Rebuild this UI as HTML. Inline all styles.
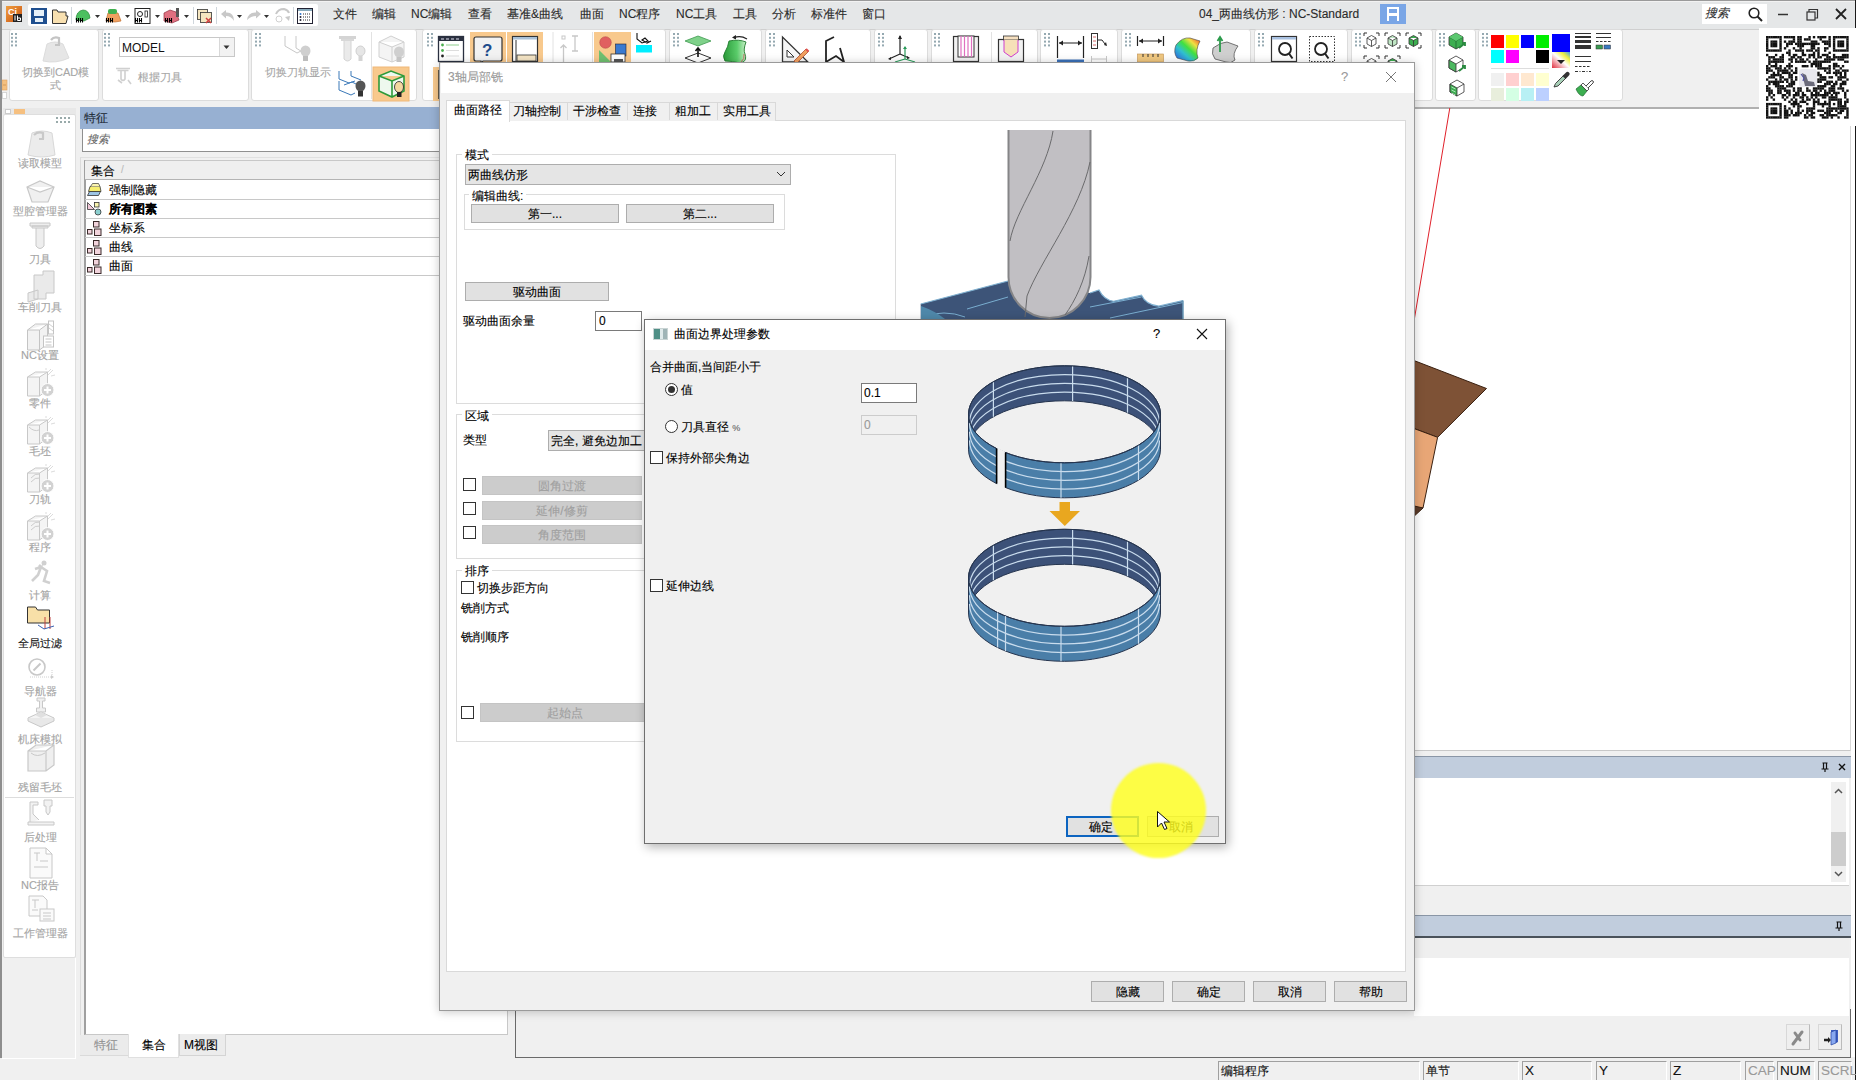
<!DOCTYPE html>
<html><head><meta charset="utf-8">
<style>
*{box-sizing:border-box;margin:0;padding:0}
html,body{width:1856px;height:1080px;overflow:hidden;background:#f0f0f0;font-family:"Liberation Sans",sans-serif;font-size:12px;color:#000}
.a{position:absolute}
.t{position:absolute;white-space:nowrap;line-height:1;-webkit-text-stroke-width:0.12px}
.tg{position:absolute;top:29px;height:72px;background:#fff;border:1px solid #dcdcdc;border-radius:3px}
.grip{position:absolute;left:4px;top:5px;width:6px;height:14px;background-image:radial-gradient(circle,#8a9aa6 1px,transparent 1.2px);background-size:4px 4px}
.btn{position:absolute;background:#e1e1e1;border:1px solid #adadad;text-align:center;line-height:18px;-webkit-text-stroke-width:0.12px}
.cb{position:absolute;width:13px;height:13px;border:1px solid #333;background:#fff}
.dis{color:#a0a0a0}
</style></head>
<body>
<!-- ============ MENU BAR ============ -->
<div class="a" style="left:0;top:0;width:1856px;height:30px;background:#e5e7e8;border-top:1px solid #9a9a9a;border-bottom:1px solid #cfcfcf"></div><div class="a" style="left:0;top:1px;width:1856px;height:1px;background:#f2f2f2"></div>
<div id="qat" class="a" style="left:28px;top:4px;width:290px;height:22px;background:#fff;border-radius:2px"></div>
<div class="t" style="left:333px;top:8px;color:#2b2b2b">文件</div><div class="t" style="left:372px;top:8px;color:#2b2b2b">编辑</div><div class="t" style="left:411px;top:8px;color:#2b2b2b">NC编辑</div><div class="t" style="left:468px;top:8px;color:#2b2b2b">查看</div><div class="t" style="left:507px;top:8px;color:#2b2b2b">基准&曲线</div><div class="t" style="left:580px;top:8px;color:#2b2b2b">曲面</div><div class="t" style="left:619px;top:8px;color:#2b2b2b">NC程序</div><div class="t" style="left:676px;top:8px;color:#2b2b2b">NC工具</div><div class="t" style="left:733px;top:8px;color:#2b2b2b">工具</div><div class="t" style="left:772px;top:8px;color:#2b2b2b">分析</div><div class="t" style="left:811px;top:8px;color:#2b2b2b">标准件</div><div class="t" style="left:862px;top:8px;color:#2b2b2b">窗口</div>
<svg class="a" style="left:0;top:0" width="330" height="29">
<defs><linearGradient id="appg" x1="0" y1="0" x2="1" y2="1"><stop offset="0" stop-color="#f0a040"/><stop offset="1" stop-color="#c85010"/></linearGradient></defs>
<rect x="6" y="6" width="16" height="16" fill="url(#appg)"/>
<text x="8" y="15" font-size="9" fill="#fff" font-family="Liberation Sans" font-weight="bold">Ci</text>
<rect x="13" y="14" width="9" height="8" fill="#222"/><path d="M15,15.5 v5 M17.5,15.5 v5 h3 v-2.5 h-3" stroke="#fff" stroke-width="1" fill="none"/>
<rect x="31" y="8" width="16" height="16" fill="#1f4f8f"/><rect x="34" y="10" width="10" height="6" fill="#e6f0f8"/><rect x="35" y="18" width="8" height="4" fill="#e6f0f8"/>
<path d="M52.5,10 L57,10 L58,12 L66,12 L66,16 L68,16 L66,23.5 L52.5,23.5 Z" fill="#f8e0b0" stroke="#333" stroke-width="1"/>
<line x1="71.5" y1="7" x2="71.5" y2="24" stroke="#cfd6dc"/>
<path d="M76,20 Q76,11 83,10 Q89,10 90,18 L84,21 Z" fill="#4cc060" stroke="#2a8a3a" stroke-width=".7"/><path d="M76.5,18 v4.5 M78.5,18 v4.5 M76,20.5 h3 M80.5,18 v4.5 M82.5,18 v4.5 M80,20.5 h3" stroke="#000" stroke-width="1.1"/>
<path d="M95,15 h5 l-2.5,3 z" fill="#333"/>
<path d="M106,21 L108,13 L118,13 L121,21 L115,22 Z" fill="#f0a060" stroke="#c07030" stroke-width=".7"/><rect x="108" y="9" width="9" height="5" rx="2" fill="#40b050"/><path d="M106.5,18 v4.5 M108.5,18 v4.5 M106,20.5 h3 M110.5,18 v4.5 M112.5,18 v4.5 M110,20.5 h3" stroke="#000" stroke-width="1.1"/>
<path d="M125,15 h5 l-2.5,3 z" fill="#333"/>
<rect x="135" y="8.5" width="15" height="15" fill="none" stroke="#222"/><circle cx="140" cy="14" r="2.5" fill="none" stroke="#222"/><rect x="145" y="11" width="2.5" height="6" fill="none" stroke="#222" stroke-width=".8"/><path d="M135.5,18 v4.5 M137.5,18 v4.5 M135,20.5 h3 M139.5,18 v4.5 M141.5,18 v4.5 M139,20.5 h3" stroke="#000" stroke-width="1.1"/>
<path d="M155,15 h5 l-2.5,3 z" fill="#333"/>
<path d="M164,21 L164,13 L170,10 L176,12 L179,20 L172,23 Z" fill="#e07080" stroke="#903040" stroke-width=".7"/><rect x="176" y="8" width="3" height="9" fill="#555"/><path d="M165.5,18 v4.5 M167.5,18 v4.5 M165,20.5 h3 M169.5,18 v4.5 M171.5,18 v4.5 M169,20.5 h3" stroke="#000" stroke-width="1.1"/>
<path d="M184,15 h5 l-2.5,3 z" fill="#333"/>
<line x1="193.5" y1="7" x2="193.5" y2="24" stroke="#cfd6dc"/>
<rect x="197.5" y="9.5" width="10" height="10" fill="#f5e6c0" stroke="#333" stroke-width=".8"/><rect x="200.5" y="12.5" width="11" height="10" fill="#f5e6c0" stroke="#333" stroke-width=".8"/><path d="M206,18 l5,5 M211,18 l-5,5" stroke="#d04040" stroke-width="1.5"/>
<line x1="216.5" y1="7" x2="216.5" y2="24" stroke="#cfd6dc"/>
<path d="M221,14 L226,10 L226,12.5 Q234,12 234,21 Q231,16 226,16 L226,18.5 Z" fill="#c8c8c8"/>
<path d="M237,15 h5 l-2.5,3 z" fill="#333"/>
<path d="M261,14 L256,10 L256,12.5 Q248,12 247,20 Q251,16 256,16 L256,18.5 Z" fill="#c8c8c8"/>
<path d="M264,15 h5 l-2.5,3 z" fill="#333"/>
<path d="M276,14 Q278,9 284,9 Q288,10 289,13" fill="none" stroke="#c8c8c8" stroke-width="2"/><path d="M285,17 l5,-1 l-1,5 z" fill="#c8c8c8"/><circle cx="279" cy="19" r="3" fill="none" stroke="#d0d0d0"/>
<line x1="293.5" y1="7" x2="293.5" y2="24" stroke="#cfd6dc"/>
<rect x="297.5" y="8.5" width="15" height="15" fill="#fff" stroke="#223" stroke-width="1"/><rect x="298" y="9" width="14" height="2" fill="#8ab"/><circle cx="300.5" cy="14" r="1" fill="#37c"/><circle cx="300.5" cy="17" r="1" fill="#223"/><circle cx="300.5" cy="20" r="1" fill="#223"/><path d="M303,14h7M303,17h7M303,20h7" stroke="#333" stroke-dasharray="1 1"/>
</svg>
<div class="t" style="left:1199px;top:8px;font-size:12px;color:#2b2b2b">04_两曲线仿形 : NC-Standard</div>
<svg class="a" style="left:1380px;top:4px" width="26" height="20"><rect width="26" height="20" fill="#7aa6e6"/><rect x="7" y="3" width="12" height="14" fill="#fff"/><rect x="9" y="5" width="8" height="4" fill="#7aa6e6"/><rect x="9" y="12" width="8" height="5" fill="#7aa6e6"/></svg>
<div class="a" style="left:1702px;top:4px;width:65px;height:20px;background:#fff"></div>
<div class="t" style="left:1705px;top:7px;font-size:12px;font-style:italic;color:#333">搜索</div>
<svg class="a" style="left:1747px;top:6px" width="18" height="17"><circle cx="7" cy="7" r="4.8" fill="none" stroke="#222" stroke-width="1.6"/><path d="M10.5,10.5 L15,15" stroke="#222" stroke-width="2"/></svg>
<svg class="a" style="left:1775px;top:6px" width="76" height="17"><path d="M3,8.5 h10" stroke="#333" stroke-width="1.5"/><rect x="32" y="6" width="8" height="8" fill="none" stroke="#333" stroke-width="1.2"/><path d="M34,6 v-2.5 h8.5 v8.5 h-2.5" fill="none" stroke="#333" stroke-width="1.2"/><path d="M61,3 l10,10 M71,3 l-10,10" stroke="#222" stroke-width="1.8"/></svg>

<!-- ============ TOOLBARS ============ -->
<div class="tg" style="left:9px;width:90px"></div>
<div class="tg" style="left:102px;width:147px"></div>
<div class="tg" style="left:251px;width:166px"></div>
<div class="tg" style="left:422px;width:244px"></div>
<div class="tg" style="left:669px;width:93px"></div>
<div class="tg" style="left:765px;width:106px"></div>
<div class="tg" style="left:874px;width:54px"></div>
<div class="tg" style="left:931px;width:107px"></div>
<div class="tg" style="left:1040px;width:78px"></div>
<div class="tg" style="left:1121px;width:130px"></div>
<div class="tg" style="left:1254px;width:94px"></div>
<div class="tg" style="left:1351px;width:82px"></div>
<div class="tg" style="left:1435px;width:41px"></div>
<div class="tg" style="left:1478px;width:145px"></div>

<!--TB--><svg class="a" style="left:0;top:0" width="1856" height="110"><rect x="2" y="80" width="5" height="10" fill="#f4c080" stroke="#e0a060" stroke-width=".6"/><line x1="3" y1="85" x2="6" y2="85" stroke="#c08040" stroke-width=".6"/><rect x="2.5" y="92.5" width="4" height="6" fill="#fff" stroke="#ccc" stroke-width=".8"/><rect x="11" y="33.0" width="2" height="2" fill="#95a9b1"/><rect x="15" y="33.0" width="2" height="2" fill="#95a9b1"/><rect x="11" y="36.8" width="2" height="2" fill="#95a9b1"/><rect x="15" y="36.8" width="2" height="2" fill="#95a9b1"/><rect x="11" y="40.6" width="2" height="2" fill="#95a9b1"/><rect x="15" y="40.6" width="2" height="2" fill="#95a9b1"/><rect x="11" y="44.4" width="2" height="2" fill="#95a9b1"/><rect x="15" y="44.4" width="2" height="2" fill="#95a9b1"/><rect x="104" y="33.0" width="2" height="2" fill="#95a9b1"/><rect x="108" y="33.0" width="2" height="2" fill="#95a9b1"/><rect x="104" y="36.8" width="2" height="2" fill="#95a9b1"/><rect x="108" y="36.8" width="2" height="2" fill="#95a9b1"/><rect x="104" y="40.6" width="2" height="2" fill="#95a9b1"/><rect x="108" y="40.6" width="2" height="2" fill="#95a9b1"/><rect x="104" y="44.4" width="2" height="2" fill="#95a9b1"/><rect x="108" y="44.4" width="2" height="2" fill="#95a9b1"/><rect x="255" y="33.0" width="2" height="2" fill="#95a9b1"/><rect x="259" y="33.0" width="2" height="2" fill="#95a9b1"/><rect x="255" y="36.8" width="2" height="2" fill="#95a9b1"/><rect x="259" y="36.8" width="2" height="2" fill="#95a9b1"/><rect x="255" y="40.6" width="2" height="2" fill="#95a9b1"/><rect x="259" y="40.6" width="2" height="2" fill="#95a9b1"/><rect x="255" y="44.4" width="2" height="2" fill="#95a9b1"/><rect x="259" y="44.4" width="2" height="2" fill="#95a9b1"/><rect x="427" y="33.0" width="2" height="2" fill="#95a9b1"/><rect x="431" y="33.0" width="2" height="2" fill="#95a9b1"/><rect x="427" y="36.8" width="2" height="2" fill="#95a9b1"/><rect x="431" y="36.8" width="2" height="2" fill="#95a9b1"/><rect x="427" y="40.6" width="2" height="2" fill="#95a9b1"/><rect x="431" y="40.6" width="2" height="2" fill="#95a9b1"/><rect x="427" y="44.4" width="2" height="2" fill="#95a9b1"/><rect x="431" y="44.4" width="2" height="2" fill="#95a9b1"/><rect x="673" y="33.0" width="2" height="2" fill="#95a9b1"/><rect x="677" y="33.0" width="2" height="2" fill="#95a9b1"/><rect x="673" y="36.8" width="2" height="2" fill="#95a9b1"/><rect x="677" y="36.8" width="2" height="2" fill="#95a9b1"/><rect x="673" y="40.6" width="2" height="2" fill="#95a9b1"/><rect x="677" y="40.6" width="2" height="2" fill="#95a9b1"/><rect x="673" y="44.4" width="2" height="2" fill="#95a9b1"/><rect x="677" y="44.4" width="2" height="2" fill="#95a9b1"/><rect x="769" y="33.0" width="2" height="2" fill="#95a9b1"/><rect x="773" y="33.0" width="2" height="2" fill="#95a9b1"/><rect x="769" y="36.8" width="2" height="2" fill="#95a9b1"/><rect x="773" y="36.8" width="2" height="2" fill="#95a9b1"/><rect x="769" y="40.6" width="2" height="2" fill="#95a9b1"/><rect x="773" y="40.6" width="2" height="2" fill="#95a9b1"/><rect x="769" y="44.4" width="2" height="2" fill="#95a9b1"/><rect x="773" y="44.4" width="2" height="2" fill="#95a9b1"/><rect x="878" y="33.0" width="2" height="2" fill="#95a9b1"/><rect x="882" y="33.0" width="2" height="2" fill="#95a9b1"/><rect x="878" y="36.8" width="2" height="2" fill="#95a9b1"/><rect x="882" y="36.8" width="2" height="2" fill="#95a9b1"/><rect x="878" y="40.6" width="2" height="2" fill="#95a9b1"/><rect x="882" y="40.6" width="2" height="2" fill="#95a9b1"/><rect x="878" y="44.4" width="2" height="2" fill="#95a9b1"/><rect x="882" y="44.4" width="2" height="2" fill="#95a9b1"/><rect x="934" y="33.0" width="2" height="2" fill="#95a9b1"/><rect x="938" y="33.0" width="2" height="2" fill="#95a9b1"/><rect x="934" y="36.8" width="2" height="2" fill="#95a9b1"/><rect x="938" y="36.8" width="2" height="2" fill="#95a9b1"/><rect x="934" y="40.6" width="2" height="2" fill="#95a9b1"/><rect x="938" y="40.6" width="2" height="2" fill="#95a9b1"/><rect x="934" y="44.4" width="2" height="2" fill="#95a9b1"/><rect x="938" y="44.4" width="2" height="2" fill="#95a9b1"/><rect x="1044" y="33.0" width="2" height="2" fill="#95a9b1"/><rect x="1048" y="33.0" width="2" height="2" fill="#95a9b1"/><rect x="1044" y="36.8" width="2" height="2" fill="#95a9b1"/><rect x="1048" y="36.8" width="2" height="2" fill="#95a9b1"/><rect x="1044" y="40.6" width="2" height="2" fill="#95a9b1"/><rect x="1048" y="40.6" width="2" height="2" fill="#95a9b1"/><rect x="1044" y="44.4" width="2" height="2" fill="#95a9b1"/><rect x="1048" y="44.4" width="2" height="2" fill="#95a9b1"/><rect x="1125" y="33.0" width="2" height="2" fill="#95a9b1"/><rect x="1129" y="33.0" width="2" height="2" fill="#95a9b1"/><rect x="1125" y="36.8" width="2" height="2" fill="#95a9b1"/><rect x="1129" y="36.8" width="2" height="2" fill="#95a9b1"/><rect x="1125" y="40.6" width="2" height="2" fill="#95a9b1"/><rect x="1129" y="40.6" width="2" height="2" fill="#95a9b1"/><rect x="1125" y="44.4" width="2" height="2" fill="#95a9b1"/><rect x="1129" y="44.4" width="2" height="2" fill="#95a9b1"/><rect x="1258" y="33.0" width="2" height="2" fill="#95a9b1"/><rect x="1262" y="33.0" width="2" height="2" fill="#95a9b1"/><rect x="1258" y="36.8" width="2" height="2" fill="#95a9b1"/><rect x="1262" y="36.8" width="2" height="2" fill="#95a9b1"/><rect x="1258" y="40.6" width="2" height="2" fill="#95a9b1"/><rect x="1262" y="40.6" width="2" height="2" fill="#95a9b1"/><rect x="1258" y="44.4" width="2" height="2" fill="#95a9b1"/><rect x="1262" y="44.4" width="2" height="2" fill="#95a9b1"/><rect x="1355" y="33.0" width="2" height="2" fill="#95a9b1"/><rect x="1359" y="33.0" width="2" height="2" fill="#95a9b1"/><rect x="1355" y="36.8" width="2" height="2" fill="#95a9b1"/><rect x="1359" y="36.8" width="2" height="2" fill="#95a9b1"/><rect x="1355" y="40.6" width="2" height="2" fill="#95a9b1"/><rect x="1359" y="40.6" width="2" height="2" fill="#95a9b1"/><rect x="1355" y="44.4" width="2" height="2" fill="#95a9b1"/><rect x="1359" y="44.4" width="2" height="2" fill="#95a9b1"/><rect x="1439" y="33.0" width="2" height="2" fill="#95a9b1"/><rect x="1443" y="33.0" width="2" height="2" fill="#95a9b1"/><rect x="1439" y="36.8" width="2" height="2" fill="#95a9b1"/><rect x="1443" y="36.8" width="2" height="2" fill="#95a9b1"/><rect x="1439" y="40.6" width="2" height="2" fill="#95a9b1"/><rect x="1443" y="40.6" width="2" height="2" fill="#95a9b1"/><rect x="1439" y="44.4" width="2" height="2" fill="#95a9b1"/><rect x="1443" y="44.4" width="2" height="2" fill="#95a9b1"/><rect x="1482" y="33.0" width="2" height="2" fill="#95a9b1"/><rect x="1486" y="33.0" width="2" height="2" fill="#95a9b1"/><rect x="1482" y="36.8" width="2" height="2" fill="#95a9b1"/><rect x="1486" y="36.8" width="2" height="2" fill="#95a9b1"/><rect x="1482" y="40.6" width="2" height="2" fill="#95a9b1"/><rect x="1486" y="40.6" width="2" height="2" fill="#95a9b1"/><rect x="1482" y="44.4" width="2" height="2" fill="#95a9b1"/><rect x="1486" y="44.4" width="2" height="2" fill="#95a9b1"/><path d="M43,61 L47,44 Q55,40 63,44 L69,58 Q56,64 43,61 Z" fill="#e6e6e6" stroke="#dcdcdc"/><path d="M51,40 Q54,36 59,38 L59,45 M55,45 h5" stroke="#c4c4c4" stroke-width="2.2" fill="none"/><rect x="119.5" y="37.5" width="115" height="19" fill="#fff" stroke="#c8c8c8"/><line x1="219.5" y1="38" x2="219.5" y2="56" stroke="#d8d8d8"/><rect x="220" y="38" width="14" height="18" fill="#f2f2f2"/><path d="M223.5,45.5 h6 l-3,3.5z" fill="#333"/><text x="122" y="51.5" font-size="12" font-family="Liberation Sans" fill="#111">MODEL</text><path d="M116,68.5 h14 M117.5,70.5 h11 M121,71 v8 q2,3 4,0 v-8 M118,80 l4,3 M128,80 l3,4" stroke="#d0d0d0" stroke-width="1.6" fill="none"/><path d="M285,36 v10 l12,7 l6,-3 M296,36 v12 l8,5" stroke="#c8c8c8" stroke-width="1" fill="none"/><ellipse cx="305.5" cy="51" rx="5" ry="5.5" fill="#cfcfcf"/><rect x="303" y="56" width="5" height="5" fill="#bdbdbd"/><rect x="339" y="36" width="17" height="3" fill="#d4d4d4"/><rect x="341" y="39" width="13" height="2" fill="#d8d8d8"/><path d="M344,41 v18 q3.5,4 7,0 v-18" fill="#eaeaea" stroke="#d4d4d4"/><ellipse cx="360.5" cy="51" rx="4.5" ry="5" fill="#e6e6e6" stroke="#d0d0d0"/><rect x="358.5" y="56" width="4" height="5" fill="#d4d4d4"/><path d="M339,71 v8 l10,4 l6,-2 M351,71 v5 l10,4 M339,81 v9 l12,5 l4,-2 M344,85 l8,-3 l4,2" stroke="#3a78b8" stroke-width="1" fill="none"/><ellipse cx="360.5" cy="86" rx="5" ry="5.5" fill="#555"/><rect x="358" y="91" width="5" height="5.5" fill="#333"/><line x1="371.5" y1="32" x2="371.5" y2="99" stroke="#e2e2e2"/><path d="M379,42 l12,-6 l13,6 v15 l-12,5 l-13,-5 Z M379,42 l13,5 l12,-5 M392,47 v15" fill="#f4f4f4" stroke="#d0d0d0"/><ellipse cx="399" cy="52" rx="5" ry="5.5" fill="#cfcfcf"/><rect x="396.5" y="57" width="5" height="5" fill="#c4c4c4"/><rect x="373" y="67" width="36" height="34" fill="#f8c98d" stroke="#f0b878"/><path d="M379,76 l12,-5 l13,5 v15 l-12,6 l-13,-6 Z M379,76 l13,5 l12,-5 M392,81 v16" fill="#eef8ee" stroke="#2e9a3a" stroke-width="1.6"/><ellipse cx="399" cy="87" rx="4.5" ry="5.5" fill="#f4d8a0" stroke="#222" stroke-width=".8"/><rect x="397" y="92" width="4.5" height="5" fill="#222"/><rect x="438.5" y="36.5" width="25" height="25" fill="#fff" stroke="#2a3040" stroke-width="1.3"/><rect x="439" y="37" width="24" height="4" fill="#2a3040"/><path d="M441,39h3M446,39h3M451,39h3M456,39h3" stroke="#dde" stroke-width="1"/><circle cx="442.5" cy="45" r="1.4" fill="#4caf50"/><circle cx="442.5" cy="50.5" r="1.4" fill="#4caf50"/><circle cx="442.5" cy="56" r="1.4" fill="#222"/><path d="M446,45h13" stroke="#a8d8a8" stroke-width="1.3"/><path d="M446,50.5h13M446,56h13" stroke="#ddd"/><rect x="470" y="32" width="36" height="31" fill="#f8c98d"/><rect x="507" y="32" width="36" height="31" fill="#f8c98d"/><path d="M476,37 h24 q2,0 2,2 v20 q0,2 -2,2 h-17 l-2,2 v-2 h-5 q-2,0 -2,-2 v-20 q0,-2 2,-2 Z" fill="#f2f2f2" stroke="#333" stroke-width="1.2"/><text x="482" y="56" font-size="17" font-weight="bold" font-family="Liberation Sans" fill="#1e4c8c">?</text><rect x="512.5" y="36.5" width="25" height="25" fill="#fff" stroke="#333" stroke-width="1.2"/><rect x="513" y="37" width="24" height="2.5" fill="#a8c0d8"/><line x1="516" y1="40" x2="516" y2="61" stroke="#333"/><rect x="517" y="55" width="19" height="6" fill="#f4e4c4" stroke="#333" stroke-width=".8"/><line x1="553" y1="32" x2="553" y2="62" stroke="#e2e2e2"/><line x1="592.5" y1="32" x2="592.5" y2="62" stroke="#e2e2e2"/><rect x="562" y="36" width="3" height="3" fill="none" stroke="#c8c8c8"/><path d="M563.5,62 v-16 M560.5,48 l3,-3 l3,3" stroke="#c8c8c8" stroke-width="1.3" fill="none"/><path d="M572,36 h6 M575,36 v15 M572,51 h6" stroke="#c8c8c8" stroke-width="1.3"/><rect x="594" y="32" width="37" height="31" fill="#f8c98d"/><circle cx="605.5" cy="42.5" r="5.8" fill="#e06060" stroke="#b04040" stroke-width=".5"/><rect x="615.5" y="44" width="10.5" height="12" fill="#3a7ad0" stroke="#223" stroke-width=".6"/><path d="M599,50 L611,62 H599 Z" fill="#70c070"/><rect x="611" y="54" width="14" height="8" fill="#fff" stroke="#333" stroke-width=".8"/><rect x="614" y="59" width="9" height="3" fill="#555"/><path d="M637,33 v6 l5,4 l6,-2 l-3,-3 l-3,2 l5,3 l4,-2" stroke="#111" stroke-width="1.1" fill="none"/><rect x="636" y="45" width="16" height="7.5" fill="#00eeff"/><rect x="433" y="67" width="7" height="34" fill="#f8c98d"/><line x1="439" y1="70" x2="439" y2="99" stroke="#333" stroke-width="1.5"/><path d="M685,41 l13,-5 l13,5 l-13,5 Z" fill="#7fd18a" stroke="#3f9a50" stroke-width=".8"/><path d="M685,58 l13,-5 l13,5 l-13,5 Z" fill="#fff" stroke="#333" stroke-width="1"/><path d="M698,57 v-8 M695.5,51 l2.5,-3 l2.5,3" stroke="#111" stroke-width="1.6" fill="none"/><defs><linearGradient id="gs" x1="0" y1="0" x2="1" y2="0"><stop offset="0" stop-color="#2a9a3a"/><stop offset=".6" stop-color="#5acc6a"/><stop offset="1" stop-color="#c8f0c8"/></linearGradient></defs><path d="M729,41 q10,-2 17,1 q-3,8 -1,12 q2,6 -2,8 l-3,1 q-8,-2 -15,-2 q-3,-5 0,-9 q3,-5 4,-11 Z" fill="url(#gs)" stroke="#1f7a2c" stroke-width=".9"/><path d="M741,62 q4,-3 3,-8" stroke="#c05050" stroke-width=".8" fill="none"/><path d="M734,38 q6,-3 13,1" stroke="#222" stroke-width="1.3" fill="none"/><path d="M732,37.5 l4,-2.5 l0,4.5z" fill="#222"/><path d="M782.5,37 V62 H808 Z" fill="#f6f6f6" stroke="#333" stroke-width="1.3"/><path d="M787,50 V57 H794 Z" fill="#fff" stroke="#333" stroke-width="1"/><path d="M794,61 l12,-12 l2.5,2.5 l-12,12 Z" fill="#f0a060" stroke="#b05030" stroke-width=".8"/><path d="M806,49 l2.5,2.5" stroke="#e05050" stroke-width="2"/><path d="M834,37 L826,41 V62 L836,56 L844,62 L840,48" stroke="#222" stroke-width="1.8" fill="none"/><path d="M900,36 v18 M900,54 l-11,5 M900,54 l9,4" stroke="#222" stroke-width="1.2" fill="none"/><path d="M898,39 l2,-4 l2,4z M891,57 l-3,2 l3,1z M907,56 l3,2 l-3,1z" fill="#222"/><path d="M905,47 v12 M905,59 l-10,3 M905,59 l10,3" stroke="#2a9a5a" stroke-width="1.2" fill="none"/><path d="M903,49 l2,-3 l2,3z" fill="#2a9a5a"/><rect x="953.5" y="36.5" width="25" height="25" fill="#f2f2f2" stroke="#333" stroke-width="1.2"/><rect x="958" y="36" width="16" height="21" fill="#fff" stroke="#333" stroke-width="1"/><path d="M961,36 v21 M964.5,36 v21 M968,36 v21 M971.5,36 v21" stroke="#e070c0" stroke-width="1.2"/><line x1="991.5" y1="32" x2="991.5" y2="62" stroke="#e2e2e2"/><rect x="998.5" y="39.5" width="25" height="22" fill="#f2f2f2" stroke="#333" stroke-width="1.2"/><rect x="1003.5" y="36" width="15" height="4" fill="#f6e0c0" stroke="#333" stroke-width=".8"/><path d="M1004,40 v12 l7,5 l7,-5 v-12" fill="#f6e0b8" stroke="#d040d0" stroke-width="1"/><path d="M1057.5,36 v22 M1083.5,36 v22 M1059,43 h23" stroke="#222" stroke-width="1.2"/><path d="M1059,43 l4,-2.5 v5z M1082,43 l-4,-2.5 v5z" fill="#222"/><rect x="1057" y="59.5" width="27" height="3" fill="#3a70b8"/><rect x="1091.5" y="33.5" width="6" height="15" fill="#fff" stroke="#333"/><path d="M1093,37 h3 M1093,41 h3 M1093,45 h3" stroke="#c44" stroke-width=".8"/><path d="M1098,40 h4 l3,4" stroke="#222" fill="none"/><path d="M1104,45 l2,-3 l1,4z" fill="#222"/><path d="M1091.5,56 v6 M1106.5,56 v6 M1092,59 h14" stroke="#c8c8c8"/><path d="M1137.5,36 v10 M1163.5,36 v10 M1139,41 h23" stroke="#222" stroke-width="1.2"/><path d="M1139,41 l4,-2.5 v5z M1162,41 l-4,-2.5 v5z" fill="#222"/><rect x="1137.5" y="54" width="26" height="8" fill="#f0c880" stroke="#c09050" stroke-width=".6"/><path d="M1143,54 v3 M1148,54 v3 M1153,54 v3 M1158,54 v3" stroke="#333"/><defs><linearGradient id="rb" x1="0" y1="1" x2="1" y2="0"><stop offset="0" stop-color="#3050e0"/><stop offset=".35" stop-color="#30c0d0"/><stop offset=".55" stop-color="#40e040"/><stop offset=".75" stop-color="#f0e040"/><stop offset="1" stop-color="#f04030"/></linearGradient></defs><path d="M1176,45 q6,-8 14,-7 l10,3 q-5,9 -2,17 q-4,4 -10,3 l-11,-3 q-4,-6 -1,-13 Z" fill="url(#rb)" stroke="#444" stroke-width=".6"/><path d="M1213,48 q8,-6 14,-6 l11,4 q-6,8 -3,14 q-4,4 -9,2 l-11,-3 q-4,-5 -2,-11 Z" fill="#cfcfcf" stroke="#444" stroke-width=".7"/><path d="M1220,52 v-13 M1217.5,41 l2.5,-4 l2.5,4" stroke="#2a9a4a" stroke-width="1.8" fill="none"/><rect x="1271.5" y="36.5" width="25" height="25" fill="#fff" stroke="#333" stroke-width="1.2"/><rect x="1272" y="37" width="24" height="2.5" fill="#a8c0e0"/><circle cx="1285" cy="49" r="6" fill="none" stroke="#222" stroke-width="1.8"/><path d="M1289,53.5 l3.5,5" stroke="#222" stroke-width="2"/><rect x="1309.5" y="36.5" width="25" height="25" fill="none" stroke="#333" stroke-width="1" stroke-dasharray="1.5 1.5"/><circle cx="1321" cy="49" r="6" fill="none" stroke="#222" stroke-width="1.8"/><path d="M1325,53.5 l3.5,5" stroke="#222" stroke-width="2"/><path d="M1364,36 v-3 h3 M1376,33 h3 v3 M1364,45 v3 h3 M1376,48 h3 v-3" stroke="#333" stroke-width="1" fill="none"/><path d="M1367,38 l4.5,-2.5 l4.5,2.5 v6 l-4.5,2.5 l-4.5,-2.5 Z M1367,38 l4.5,2.5 l4.5,-2.5 M1371.5,40.5 v6" fill="#fff" stroke="#333" stroke-width=".8"/><path d="M1385,36 v-3 h3 M1397,33 h3 v3 M1385,45 v3 h3 M1397,48 h3 v-3" stroke="#333" stroke-width="1" fill="none"/><path d="M1388,38 l4.5,-2.5 l4.5,2.5 v6 l-4.5,2.5 l-4.5,-2.5 Z M1388,38 l4.5,2.5 l4.5,-2.5 M1392.5,40.5 v6" fill="#bfe6c4" stroke="#333" stroke-width=".8"/><path d="M1406,36 v-3 h3 M1418,33 h3 v3 M1406,45 v3 h3 M1418,48 h3 v-3" stroke="#333" stroke-width="1" fill="none"/><path d="M1409,38 l4.5,-2.5 l4.5,2.5 v6 l-4.5,2.5 l-4.5,-2.5 Z M1409,38 l4.5,2.5 l4.5,-2.5 M1413.5,40.5 v6" fill="#3cae50" stroke="#333" stroke-width=".8"/><path d="M1364,59 v-3 h3 M1376,56 h3 v3 M1364,68 v3 h3 M1376,71 h3 v-3" stroke="#333" stroke-width="1" fill="none"/><path d="M1367,61 l4.5,-2.5 l4.5,2.5 v6 l-4.5,2.5 l-4.5,-2.5 Z M1367,61 l4.5,2.5 l4.5,-2.5 M1371.5,63.5 v6" fill="#fff" stroke="#333" stroke-width=".8"/><path d="M1385,59 v-3 h3 M1397,56 h3 v3 M1385,68 v3 h3 M1397,71 h3 v-3" stroke="#333" stroke-width="1" fill="none"/><path d="M1388,61 l4.5,-2.5 l4.5,2.5 v6 l-4.5,2.5 l-4.5,-2.5 Z M1388,61 l4.5,2.5 l4.5,-2.5 M1392.5,63.5 v6" fill="#3cae50" stroke="#333" stroke-width=".8"/><path d="M1449,37 l7,-4 l7,4 v8 l-7,4 l-7,-4 Z" fill="#3cae50" stroke="#333" stroke-width=".8"/><path d="M1449,37 l7,4 l7,-4 M1456,41 v8" fill="none" stroke="#1f6a30" stroke-width=".8"/><path d="M1449,37 l7,-4 l7,4 l-7,4z" fill="#5cc870"/><path d="M1459,48 l5,-4 M1462,43 h3 v3" stroke="#2a8a40" stroke-width="1.8" fill="none"/><path d="M1449,60 l7,-4 l7,4 v8 l-7,4 l-7,-4 Z" fill="#fff" stroke="#333" stroke-width=".8"/><path d="M1449,60 l7,4 v8 l-7,-4z" fill="#4cb860" stroke="#333" stroke-width=".8"/><path d="M1456,64 l7,-4" stroke="#333" stroke-width=".8"/><path d="M1459,71 l5,-4 M1462,66 h3 v3" stroke="#2a8a40" stroke-width="1.8" fill="none"/><path d="M1450,84 l7,-4 l7,4 v8 l-7,4 l-7,-4 Z" fill="#fff" stroke="#333" stroke-width=".8"/><path d="M1450,84 l7,4 v8 l-7,-4z" fill="#3cae50" stroke="#333" stroke-width=".8"/><path d="M1457,88 l7,-4" stroke="#333" stroke-width=".8"/><path d="M1451.5,87 l4,2 M1451.5,90 l4,2 M1451.5,93 l4,2" stroke="#c8f0d0" stroke-width=".8"/><rect x="1491" y="35" width="13" height="13" fill="#ff0000"/><rect x="1506" y="35" width="13" height="13" fill="#ffff00"/><rect x="1521" y="35" width="13" height="13" fill="#0000ff"/><rect x="1536" y="35" width="13" height="13" fill="#00ee00"/><rect x="1491" y="50" width="13" height="13" fill="#00ffff"/><rect x="1506" y="50" width="13" height="13" fill="#ff00ff"/><rect x="1536" y="50" width="13" height="13" fill="#000000"/><line x1="1491" y1="68.5" x2="1549" y2="68.5" stroke="#ddd"/><rect x="1491" y="73" width="13" height="13" fill="#f0f0f0"/><rect x="1506" y="73" width="13" height="13" fill="#ffd0d0"/><rect x="1521" y="73" width="13" height="13" fill="#ffe8d0"/><rect x="1536" y="73" width="13" height="13" fill="#ffffd0"/><rect x="1491" y="88" width="13" height="13" fill="#e8eedc"/><rect x="1506" y="88" width="13" height="13" fill="#d4ffe4"/><rect x="1521" y="88" width="13" height="13" fill="#b8f0f4"/><rect x="1536" y="88" width="13" height="13" fill="#bcd0ff"/><rect x="1552" y="34" width="18" height="18" fill="#0000ff"/><defs><linearGradient id="cw" x1="0" y1="1" x2="1" y2="0"><stop offset="0" stop-color="#e03040"/><stop offset=".5" stop-color="#fff"/><stop offset=".75" stop-color="#f0f040"/><stop offset="1" stop-color="#40a0f0"/></linearGradient></defs><rect x="1552" y="52" width="18" height="16" fill="url(#cw)"/><path d="M1557,60 h8 l-4,4z" fill="#222"/><path d="M1575,33.5 h16" stroke="#333" stroke-width="1"/><path d="M1575,37 h16" stroke="#333" stroke-width="2"/><path d="M1575,41.5 h16" stroke="#333" stroke-width="3"/><path d="M1575,47 h16" stroke="#333" stroke-width="4"/><path d="M1596,33.5 h15 M1596,37.5 h15" stroke="#333" stroke-width="1"/><path d="M1596,41.5 h15" stroke="#333" stroke-width="1.2" stroke-dasharray="2.5 1.5"/><rect x="1596" y="45" width="6.5" height="4" fill="#3a9a50" stroke="#333" stroke-width=".5"/><rect x="1604" y="45" width="6.5" height="4" fill="#3a78c0" stroke="#333" stroke-width=".5"/><path d="M1575,56.5 h16 M1575,61.5 h16" stroke="#333" stroke-width="1"/><path d="M1575,66.5 h16" stroke="#333" stroke-width="1.2" stroke-dasharray="2.5 1.5"/><path d="M1575,71.5 h16" stroke="#333" stroke-width="1.2" stroke-dasharray="3 1.5 1 1.5"/><path d="M1554,87 l1.5,-3.5 l8,-8 l2.5,2.5 l-8,8 Z" fill="#a8d0b8" stroke="#333" stroke-width=".9"/><path d="M1562.5,76 l3,-3 q2,-2 3.5,-.5 q1.5,1.5 -.5,3.5 l-3,3 z" fill="#333"/><path d="M1576,89 l5,-4 l6,6 l-4,5 q-4,0 -7,-7z" fill="#3cae50" stroke="#1f6a30" stroke-width=".7"/><path d="M1581,85 l2,-2 l6,6 l-2,2z" fill="#fff" stroke="#333" stroke-width=".8"/><path d="M1586,86 l5,-5 q1,-1 2,0 q1,1 0,2 l-5,5" fill="#fff" stroke="#333" stroke-width=".9"/></svg>
<div class="t" style="left:22px;top:67px;color:#a6a6a6;font-size:11px">切换到CAD模</div>
<div class="t" style="left:50px;top:80px;color:#a6a6a6;font-size:11px">式</div>
<div class="t" style="left:138px;top:72px;color:#a6a6a6;font-size:11px">根据刀具</div>
<div class="t" style="left:265px;top:67px;color:#a6a6a6;font-size:11px">切换刀轨显示</div>
<!--/TB-->
<!-- ============ LEFT SIDEBAR ============ -->
<!--SB--><div class="a" style="left:0;top:0;width:2px;height:1058px;background:#8e8e8e"></div>
<div class="a" style="left:3px;top:108px;width:73px;height:7px;background:#e8e8e8"></div>
<div class="a" style="left:5px;top:109px;width:6px;height:5px;background:#fff;border:1px solid #ccc"></div><div class="a" style="left:14px;top:109px;width:11px;height:5px;background:#f6c080"></div>
<div class="a" style="left:3px;top:114px;width:73px;height:844px;background:#fff;border:1px solid #dedede;border-radius:2px"></div>
<svg class="a" style="left:56px;top:117px" width="18" height="8"><g fill="#9aa"><rect x="0" y="0" width="2" height="2"/><rect x="0" y="4" width="2" height="2"/><rect x="4" y="0" width="2" height="2"/><rect x="4" y="4" width="2" height="2"/><rect x="8" y="0" width="2" height="2"/><rect x="8" y="4" width="2" height="2"/><rect x="12" y="0" width="2" height="2"/><rect x="12" y="4" width="2" height="2"/></g></svg>
<div class="a" style="left:5px;top:797px;width:69px;height:1px;background:#ddd"></div>
<div class="a" style="left:75px;top:958px;width:1px;height:100px;background:#fff"></div><div class="a" style="left:2px;top:1058px;width:74px;height:1px;background:#fff"></div>
<svg class="a" style="left:0;top:24px" width="80" height="940"><path d="M28,131 l4,-22 q10,-4 20,0 l3,22 q-13,4 -27,0 Z" fill="#ececec" stroke="#d8d8d8"/><path d="M34,111 q4,-4 9,-2 v6 M39,115 h5" stroke="#c8c8c8" stroke-width="2.2" fill="none"/><path d="M27,163 l13,-6 l14,6 l-6,15 h-16 Z M27,163 l13,5 l14,-5" fill="#f0f0f0" stroke="#c8c8c8" stroke-width="1.2"/><path d="M30,199 h20 v3 h-20z M32,202 h16 v2 h-16z M36,204 v18 q4,5 8,0 v-18" fill="#eee" stroke="#c8c8c8"/><path d="M34,251 h9 v-4 h11 v22 h-8 v6 h-12 z M28,269 l10,-3 v9 l-10,3z" fill="#eaeaea" stroke="#c8c8c8"/><path d="M27.5,306 l8,-6 h12 v20 l-8,6 h-12 z M27.5,306 h12 l8,-6 M39.5,306 v20" fill="#f2f2f2" stroke="#c4c4c4"/><rect x="43.5" y="312" width="10" height="11" fill="#fff" stroke="#c4c4c4"/><path d="M45.5,315h6M45.5,318h6M45.5,321h6" stroke="#c4c4c4"/><rect x="48.5" y="297" width="5" height="13" fill="#fff" stroke="#c4c4c4"/><path d="M49,300 l4,3 M49,304 l4,3" stroke="#d0d0d0"/><path d="M27.5,353 l8,-5 h12 v18 l-8,6 h-12 z M27.5,353 h12 l8,-5 M39.5,353 v19" fill="#f4f4f4" stroke="#c8c8c8"/><circle cx="47.5" cy="366" r="6.5" fill="#d2d2d2" stroke="#fff" stroke-width="1"/><path d="M47.5,362.5 v7 M44,366 h7" stroke="#fff" stroke-width="2"/><path d="M48,348 l3,-3 M51,352 l4,-1 M48,351 l5,-5 M46,346 v-2" stroke="#dcdcdc"/><path d="M27.5,401 l8,-5 h12 v18 l-8,6 h-12 z M27.5,401 h12 l8,-5 M39.5,401 v19" fill="#f4f4f4" stroke="#c8c8c8"/><path d="M29,403 q5,5 10,3" stroke="#ccc" fill="none"/><circle cx="47.5" cy="414" r="6.5" fill="#d2d2d2" stroke="#fff" stroke-width="1"/><path d="M47.5,410.5 v7 M44,414 h7" stroke="#fff" stroke-width="2"/><path d="M48,396 l3,-3 M51,400 l4,-1 M48,399 l5,-5 M46,394 v-2" stroke="#dcdcdc"/><path d="M27.5,449 l8,-5 h12 v18 l-8,6 h-12 z M27.5,449 h12 l8,-5 M39.5,449 v19" fill="#f4f4f4" stroke="#c8c8c8"/><path d="M31,454 q4,-5 9,-4 M31,458 q4,-5 9,-4" stroke="#ccc" fill="none"/><circle cx="47.5" cy="462" r="6.5" fill="#d2d2d2" stroke="#fff" stroke-width="1"/><path d="M47.5,458.5 v7 M44,462 h7" stroke="#fff" stroke-width="2"/><path d="M48,444 l3,-3 M51,448 l4,-1 M48,447 l5,-5 M46,442 v-2" stroke="#dcdcdc"/><path d="M27.5,497 l8,-5 h12 v18 l-8,6 h-12 z M27.5,497 h12 l8,-5 M39.5,497 v19" fill="#f4f4f4" stroke="#c8c8c8"/><path d="M31,502 q4,-5 9,-4 M31,506 q4,-5 9,-4" stroke="#ccc" fill="none"/><circle cx="47.5" cy="510" r="6.5" fill="#d2d2d2" stroke="#fff" stroke-width="1"/><path d="M47.5,506.5 v7 M44,510 h7" stroke="#fff" stroke-width="2"/><path d="M48,492 l3,-3 M51,496 l4,-1 M48,495 l5,-5 M46,490 v-2" stroke="#dcdcdc"/><path d="M32,557 l6,-6 l3,-8 l-6,2 M41,543 l6,4 l-3,10 l6,2 M41,543 l-2,-2" stroke="#d0d0d0" stroke-width="2.6" fill="none"/><circle cx="44" cy="539" r="2.5" fill="#d0d0d0"/><path d="M27.5,583 h8 l2,3 h12 v13 h-22 z" fill="#f8e0a8" stroke="#333" stroke-width="1"/><path d="M45,593 v12 M50,593 v12" stroke="#c04040"/><path d="M38,601 l6,4 l10,-3" stroke="#3a60b0" fill="none"/><circle cx="37" cy="643" r="8" fill="none" stroke="#c8c8c8" stroke-width="1.6"/><path d="M33.5,646.5 l7,-7" stroke="#c8c8c8" stroke-width="2"/><path d="M30,653 h22 v-7" stroke="#d0d0d0" stroke-dasharray="1 1" fill="none"/><path d="M51,651 l3,2 l-3,2z" fill="#ccc"/><path d="M37,674 h8 v3 h-2.5 v7 h3 v4 h-9 v-4 h3 v-7 h-2.5z" fill="#f0f0f0" stroke="#c8c8c8"/><path d="M28,694 l13,-6 l13,6 l-13,6 z" fill="#f4f4f4" stroke="#c8c8c8"/><path d="M28,694 v3 l13,6 l13,-6 v-3" fill="#e8e8e8" stroke="#c8c8c8"/><path d="M35,691 l6,-3 l6,3 l-6,3z" fill="#e0e0e0"/><path d="M28,727 l8,-6 h18 v20 l-8,6 h-18 z M28,727 h18 l8,-6 M46,727 v20" fill="#efefef" stroke="#c8c8c8" stroke-width="1.2"/><path d="M31,729 q6,5 14,0" stroke="#c8c8c8" fill="none"/><path d="M28,801 h26 v-3 h-26z M30,798 v-20 h8 v3 h-5 v9 l6,6 M44,776 h8 v6 h-2 v6 l-2,3 l-2,-3 v-6 h-2z" fill="#f2f2f2" stroke="#c8c8c8"/><path d="M30,824 h16 l6,6 v24 h-22 z M46,824 v6 h6" fill="#fafafa" stroke="#c8c8c8"/><path d="M34,829 h6 M37,829 v8 M40,837 h8 M34,843 h14" stroke="#c8c8c8"/><path d="M29,872 h14 l4,4 v16 h-18 z" fill="#fafafa" stroke="#c8c8c8"/><rect x="40" y="885" width="14" height="12" fill="#fafafa" stroke="#c8c8c8"/><path d="M43,889h8M43,892h8M43,895h8" stroke="#c8c8c8"/><path d="M32,876h7M35,876v8M32,886h6" stroke="#c8c8c8"/></svg>
<div class="t" style="left:0;width:80px;text-align:center;top:158px;font-size:11px;color:#a4a4a4">读取模型</div>
<div class="t" style="left:0;width:80px;text-align:center;top:206px;font-size:11px;color:#a4a4a4">型腔管理器</div>
<div class="t" style="left:0;width:80px;text-align:center;top:254px;font-size:11px;color:#a4a4a4">刀具</div>
<div class="t" style="left:0;width:80px;text-align:center;top:302px;font-size:11px;color:#a4a4a4">车削刀具</div>
<div class="t" style="left:0;width:80px;text-align:center;top:350px;font-size:11px;color:#a4a4a4">NC设置</div>
<div class="t" style="left:0;width:80px;text-align:center;top:398px;font-size:11px;color:#a4a4a4">零件</div>
<div class="t" style="left:0;width:80px;text-align:center;top:446px;font-size:11px;color:#a4a4a4">毛坯</div>
<div class="t" style="left:0;width:80px;text-align:center;top:494px;font-size:11px;color:#a4a4a4">刀轨</div>
<div class="t" style="left:0;width:80px;text-align:center;top:542px;font-size:11px;color:#a4a4a4">程序</div>
<div class="t" style="left:0;width:80px;text-align:center;top:590px;font-size:11px;color:#a4a4a4">计算</div>
<div class="t" style="left:0;width:80px;text-align:center;top:638px;font-size:11px;color:#111">全局过滤</div>
<div class="t" style="left:0;width:80px;text-align:center;top:686px;font-size:11px;color:#a4a4a4">导航器</div>
<div class="t" style="left:0;width:80px;text-align:center;top:734px;font-size:11px;color:#a4a4a4">机床模拟</div>
<div class="t" style="left:0;width:80px;text-align:center;top:782px;font-size:11px;color:#a4a4a4">残留毛坯</div>
<div class="t" style="left:0;width:80px;text-align:center;top:832px;font-size:11px;color:#a4a4a4">后处理</div>
<div class="t" style="left:0;width:80px;text-align:center;top:880px;font-size:11px;color:#a4a4a4">NC报告</div>
<div class="t" style="left:0;width:80px;text-align:center;top:928px;font-size:11px;color:#a4a4a4">工作管理器</div>
<div class="a" style="left:80px;top:107px;width:432px;height:22px;background:#97b0d2"></div>
<div class="t" style="left:84px;top:112px;font-size:12px;color:#1e2a36">特征</div>
<div class="a" style="left:82px;top:129px;width:430px;height:23px;background:#fff;border:1px solid #8f8f8f;border-top:none"></div>
<div class="t" style="left:87px;top:134px;font-size:11px;font-style:italic;color:#666">搜索</div>
<div class="a" style="left:76px;top:153px;width:438px;height:905px;background:#f0f0f0"></div>
<div class="a" style="left:80px;top:157px;width:428px;height:878px;border-left:1px solid #dcdcdc;border-top:1px solid #e0e0e0"></div>
<div class="a" style="left:84px;top:160px;width:424px;height:875px;background:#fff;border:1px solid #c8c8c8;border-left:2px solid #a0a0a0"></div>
<div class="a" style="left:85px;top:161px;width:427px;height:19px;background:#efefef;border-bottom:1px solid #b4b4b4"></div>
<div class="t" style="left:91px;top:165px;font-size:12px">集合</div><div class="t" style="left:121px;top:165px;font-size:10px;color:#bbb">/</div>
<div class="a" style="left:85px;top:199px;width:427px;height:1px;background:#c8c8c8"></div>
<div class="t" style="left:109px;top:184px;font-size:12px;">强制隐藏</div>
<div class="a" style="left:85px;top:218px;width:427px;height:1px;background:#c8c8c8"></div>
<div class="t" style="left:109px;top:203px;font-size:12px;font-weight:bold;">所有图素</div>
<div class="a" style="left:85px;top:237px;width:427px;height:1px;background:#c8c8c8"></div>
<div class="t" style="left:109px;top:222px;font-size:12px;">坐标系</div>
<div class="a" style="left:85px;top:256px;width:427px;height:1px;background:#c8c8c8"></div>
<div class="t" style="left:109px;top:241px;font-size:12px;">曲线</div>
<div class="a" style="left:85px;top:275px;width:427px;height:1px;background:#c8c8c8"></div>
<div class="t" style="left:109px;top:260px;font-size:12px;">曲面</div>
<svg class="a" style="left:0;top:0" width="120" height="280"><path d="M87.5,195.5 l2,-4 h11 l-2,4z" fill="#9cc4e4" stroke="#333" stroke-width=".8"/><path d="M88.5,191.5 l1.5,-5 h10 l1,5z" fill="#f6ee70" stroke="#333" stroke-width=".8"/><path d="M90.5,186.5 l2,-3 h6 l1.5,3" fill="#faf4b0" stroke="#333" stroke-width=".7"/><path d="M87.5,202.5 v7 h7z" fill="#f0c8d8" stroke="#333" stroke-width=".8"/><rect x="94.5" y="202.5" width="4.5" height="4.5" fill="#f8f4b0" stroke="#333" stroke-width=".8"/><circle cx="98" cy="212" r="3" fill="#8cd0d0" stroke="#333" stroke-width=".8"/><rect x="93.5" y="221.5" width="5.5" height="5.5" fill="#f2d4dc" stroke="#3a2a2a" stroke-width="1"/><rect x="87.5" y="229.5" width="4.5" height="4.5" fill="#f2d4dc" stroke="#3a2a2a" stroke-width="1"/><rect x="94.5" y="229" width="6.5" height="6.5" fill="#f2d4dc" stroke="#3a2a2a" stroke-width="1"/><rect x="93.5" y="240.5" width="5.5" height="5.5" fill="#f2d4dc" stroke="#3a2a2a" stroke-width="1"/><rect x="87.5" y="248.5" width="4.5" height="4.5" fill="#f2d4dc" stroke="#3a2a2a" stroke-width="1"/><rect x="94.5" y="248" width="6.5" height="6.5" fill="#f2d4dc" stroke="#3a2a2a" stroke-width="1"/><rect x="93.5" y="259.5" width="5.5" height="5.5" fill="#f2d4dc" stroke="#3a2a2a" stroke-width="1"/><rect x="87.5" y="267.5" width="4.5" height="4.5" fill="#f2d4dc" stroke="#3a2a2a" stroke-width="1"/><rect x="94.5" y="267" width="6.5" height="6.5" fill="#f2d4dc" stroke="#3a2a2a" stroke-width="1"/></svg>
<div class="a" style="left:80px;top:1035px;width:48px;height:21px;background:#ebebeb;border-bottom:1px solid #dadada"></div>
<div class="a" style="left:128px;top:1034px;width:51px;height:24px;background:#fff;border:1px solid #e0e0e0;border-top:none"></div>
<div class="a" style="left:179px;top:1034px;width:47px;height:22px;background:#ececec;border:1px solid #d4d4d4;border-top:none"></div>
<div class="t" style="left:94px;top:1039px;color:#909090">特征</div>
<div class="t" style="left:142px;top:1039px">集合</div>
<div class="t" style="left:184px;top:1039px">M视图</div>
<!--/SB-->
<!-- ============ VIEWPORT ============ -->
<!--VP--><div class="a" style="left:515px;top:107px;width:1336px;height:644px;background:#fff;border-top:2px solid #b0b0b0;border-bottom:1px solid #c8c8c8"></div>
<svg class="a" style="left:1400px;top:100px" width="100" height="440">
<line x1="49.8" y1="8" x2="10" y2="245" stroke="#e0202a" stroke-width="1"/>
<path d="M10,259 L86.5,288.5 L37.6,337.3 L10,327 Z" fill="#7e5236" stroke="#3a2010" stroke-width="1"/>
<path d="M10,327 L37.6,337.3 L23,408 L10,410 Z" fill="#e8a676" stroke="#3a2010" stroke-width="1"/>
<path d="M10,405 L23,408 L10,420 Z" fill="#5a3a28" stroke="#3a2010" stroke-width="1"/>
</svg>
<div class="a" style="left:1414px;top:756px;width:437px;height:22px;background:#c1cddd;border-top:1px solid #8a96a6"></div>
<svg class="a" style="left:1818px;top:759px" width="32" height="16"><path d="M4.5,4 h5 M5.5,4 v6 M8.5,4 v6 M3.5,10 h7 M7,10 v3" stroke="#111" stroke-width="1.2" fill="none"/><path d="M21,5 l6,6 M27,5 l-6,6" stroke="#111" stroke-width="1.4"/></svg>
<div class="a" style="left:1414px;top:778px;width:435px;height:108px;background:#fff;border-bottom:1px solid #d0d0d0"></div>
<div class="a" style="left:1831px;top:782px;width:15px;height:100px;background:#f0f0f0"></div>
<div class="a" style="left:1831px;top:832px;width:15px;height:34px;background:#cdcdcd"></div>
<svg class="a" style="left:1831px;top:782px" width="15" height="100"><path d="M4,11 l3.5,-3.5 l3.5,3.5" stroke="#555" stroke-width="1.5" fill="none"/><path d="M4,90 l3.5,3.5 l3.5,-3.5" stroke="#555" stroke-width="1.5" fill="none"/></svg>
<div class="a" style="left:1414px;top:915px;width:437px;height:23px;background:#c1cddd;border-top:1px solid #8a96a6;border-bottom:2px solid #4a525a"></div>
<svg class="a" style="left:1832px;top:918px" width="16" height="16"><path d="M4.5,4 h5 M5.5,4 v6 M8.5,4 v6 M3.5,10 h7 M7,10 v3" stroke="#111" stroke-width="1.2" fill="none"/></svg>
<div class="a" style="left:1414px;top:938px;width:435px;height:20px;background:#efefef"></div>
<div class="a" style="left:1414px;top:958px;width:435px;height:58px;background:#fff"></div>
<div class="a" style="left:515px;top:1009px;width:1336px;height:49px;border-left:1px solid #6a6a6a;border-right:1px solid #6a6a6a;border-bottom:1px solid #6a6a6a"></div>
<div class="a" style="left:1786px;top:1024px;width:24px;height:26px;background:#efefef;border:1px solid #d8d8d8;border-right-color:#bbb;border-bottom-color:#bbb"></div>
<div class="a" style="left:1818px;top:1024px;width:24px;height:26px;background:#efefef;border:1px solid #d8d8d8;border-right-color:#bbb;border-bottom-color:#bbb"></div>
<svg class="a" style="left:1786px;top:1024px" width="60" height="26"><path d="M7,20 l9,-12 M9,9 l5,7" stroke="#8a8a8a" stroke-width="3" stroke-linecap="round"/><path d="M38,16 h5" stroke="#222" stroke-width="2.5"/><path d="M42,13 l3,3 l-3,3z" fill="#222"/><path d="M45,6 h7 v12 l-2,1 v-11 l-5,2 Z" fill="#4060c0"/><path d="M45,8 l5,-2 v13 l-5,2 Z" fill="#88a8f0" stroke="#2040a0" stroke-width=".7"/></svg>
<div class="a" style="left:1851px;top:107px;width:4px;height:950px;background:#fff"></div><div class="a" style="left:1850px;top:107px;width:1px;height:644px;background:#d8d8d8"></div><div class="a" style="left:1855px;top:0;width:1px;height:1080px;background:#1a1a1a"></div>
<div class="a" style="left:1218px;top:1061px;width:202px;height:19px;border-top:1px solid #a0a0a0;border-left:1px solid #a0a0a0;border-right:1px solid #fff"></div>
<div class="t" style="left:1221px;top:1065px;font-size:12px;color:#111">编辑程序</div>
<div class="a" style="left:1423px;top:1061px;width:96px;height:19px;border-top:1px solid #a0a0a0;border-left:1px solid #a0a0a0;border-right:1px solid #fff"></div>
<div class="t" style="left:1426px;top:1065px;font-size:12px;color:#111">单节</div>
<div class="a" style="left:1522px;top:1061px;width:70px;height:19px;border-top:1px solid #a0a0a0;border-left:1px solid #a0a0a0;border-right:1px solid #fff"></div>
<div class="t" style="left:1525px;top:1064px;font-size:13.5px;color:#111">X</div>
<div class="a" style="left:1596px;top:1061px;width:71px;height:19px;border-top:1px solid #a0a0a0;border-left:1px solid #a0a0a0;border-right:1px solid #fff"></div>
<div class="t" style="left:1599px;top:1064px;font-size:13.5px;color:#111">Y</div>
<div class="a" style="left:1670px;top:1061px;width:71px;height:19px;border-top:1px solid #a0a0a0;border-left:1px solid #a0a0a0;border-right:1px solid #fff"></div>
<div class="t" style="left:1673px;top:1064px;font-size:13.5px;color:#111">Z</div>
<div class="a" style="left:1745px;top:1061px;width:29px;height:19px;border-top:1px solid #a0a0a0;border-left:1px solid #a0a0a0;border-right:1px solid #fff"></div>
<div class="t" style="left:1748px;top:1064px;font-size:13.5px;color:#999">CAP</div>
<div class="a" style="left:1777px;top:1061px;width:38px;height:19px;border-top:1px solid #a0a0a0;border-left:1px solid #a0a0a0;border-right:1px solid #fff"></div>
<div class="t" style="left:1780px;top:1064px;font-size:13.5px;color:#111">NUM</div>
<div class="a" style="left:1818px;top:1061px;width:34px;height:19px;border-top:1px solid #a0a0a0;border-left:1px solid #a0a0a0;border-right:1px solid #fff"></div>
<div class="t" style="left:1821px;top:1064px;font-size:13.5px;color:#999">SCRL</div>
<div class="a" style="left:1759px;top:28px;width:97px;height:98px;background:#fff"></div>
<svg class="a" style="left:1766px;top:36px" width="84" height="84"><g fill="#111"><rect x="0.00" y="0.00" width="2.38" height="2.38"/><rect x="2.23" y="0.00" width="2.38" height="2.38"/><rect x="4.46" y="0.00" width="2.38" height="2.38"/><rect x="6.69" y="0.00" width="2.38" height="2.38"/><rect x="8.92" y="0.00" width="2.38" height="2.38"/><rect x="11.15" y="0.00" width="2.38" height="2.38"/><rect x="13.38" y="0.00" width="2.38" height="2.38"/><rect x="17.84" y="0.00" width="2.38" height="2.38"/><rect x="20.07" y="0.00" width="2.38" height="2.38"/><rect x="22.30" y="0.00" width="2.38" height="2.38"/><rect x="24.53" y="0.00" width="2.38" height="2.38"/><rect x="26.76" y="0.00" width="2.38" height="2.38"/><rect x="31.22" y="0.00" width="2.38" height="2.38"/><rect x="33.45" y="0.00" width="2.38" height="2.38"/><rect x="42.37" y="0.00" width="2.38" height="2.38"/><rect x="46.83" y="0.00" width="2.38" height="2.38"/><rect x="51.29" y="0.00" width="2.38" height="2.38"/><rect x="53.52" y="0.00" width="2.38" height="2.38"/><rect x="55.75" y="0.00" width="2.38" height="2.38"/><rect x="57.98" y="0.00" width="2.38" height="2.38"/><rect x="62.44" y="0.00" width="2.38" height="2.38"/><rect x="66.90" y="0.00" width="2.38" height="2.38"/><rect x="69.13" y="0.00" width="2.38" height="2.38"/><rect x="71.36" y="0.00" width="2.38" height="2.38"/><rect x="73.59" y="0.00" width="2.38" height="2.38"/><rect x="75.82" y="0.00" width="2.38" height="2.38"/><rect x="78.05" y="0.00" width="2.38" height="2.38"/><rect x="80.28" y="0.00" width="2.38" height="2.38"/><rect x="0.00" y="2.23" width="2.38" height="2.38"/><rect x="13.38" y="2.23" width="2.38" height="2.38"/><rect x="26.76" y="2.23" width="2.38" height="2.38"/><rect x="31.22" y="2.23" width="2.38" height="2.38"/><rect x="33.45" y="2.23" width="2.38" height="2.38"/><rect x="37.91" y="2.23" width="2.38" height="2.38"/><rect x="40.14" y="2.23" width="2.38" height="2.38"/><rect x="42.37" y="2.23" width="2.38" height="2.38"/><rect x="53.52" y="2.23" width="2.38" height="2.38"/><rect x="62.44" y="2.23" width="2.38" height="2.38"/><rect x="66.90" y="2.23" width="2.38" height="2.38"/><rect x="80.28" y="2.23" width="2.38" height="2.38"/><rect x="0.00" y="4.46" width="2.38" height="2.38"/><rect x="4.46" y="4.46" width="2.38" height="2.38"/><rect x="6.69" y="4.46" width="2.38" height="2.38"/><rect x="8.92" y="4.46" width="2.38" height="2.38"/><rect x="13.38" y="4.46" width="2.38" height="2.38"/><rect x="17.84" y="4.46" width="2.38" height="2.38"/><rect x="22.30" y="4.46" width="2.38" height="2.38"/><rect x="24.53" y="4.46" width="2.38" height="2.38"/><rect x="26.76" y="4.46" width="2.38" height="2.38"/><rect x="31.22" y="4.46" width="2.38" height="2.38"/><rect x="33.45" y="4.46" width="2.38" height="2.38"/><rect x="44.60" y="4.46" width="2.38" height="2.38"/><rect x="46.83" y="4.46" width="2.38" height="2.38"/><rect x="49.06" y="4.46" width="2.38" height="2.38"/><rect x="55.75" y="4.46" width="2.38" height="2.38"/><rect x="57.98" y="4.46" width="2.38" height="2.38"/><rect x="60.21" y="4.46" width="2.38" height="2.38"/><rect x="62.44" y="4.46" width="2.38" height="2.38"/><rect x="66.90" y="4.46" width="2.38" height="2.38"/><rect x="71.36" y="4.46" width="2.38" height="2.38"/><rect x="73.59" y="4.46" width="2.38" height="2.38"/><rect x="75.82" y="4.46" width="2.38" height="2.38"/><rect x="80.28" y="4.46" width="2.38" height="2.38"/><rect x="0.00" y="6.69" width="2.38" height="2.38"/><rect x="4.46" y="6.69" width="2.38" height="2.38"/><rect x="6.69" y="6.69" width="2.38" height="2.38"/><rect x="8.92" y="6.69" width="2.38" height="2.38"/><rect x="13.38" y="6.69" width="2.38" height="2.38"/><rect x="20.07" y="6.69" width="2.38" height="2.38"/><rect x="22.30" y="6.69" width="2.38" height="2.38"/><rect x="24.53" y="6.69" width="2.38" height="2.38"/><rect x="28.99" y="6.69" width="2.38" height="2.38"/><rect x="31.22" y="6.69" width="2.38" height="2.38"/><rect x="33.45" y="6.69" width="2.38" height="2.38"/><rect x="35.68" y="6.69" width="2.38" height="2.38"/><rect x="37.91" y="6.69" width="2.38" height="2.38"/><rect x="40.14" y="6.69" width="2.38" height="2.38"/><rect x="42.37" y="6.69" width="2.38" height="2.38"/><rect x="44.60" y="6.69" width="2.38" height="2.38"/><rect x="46.83" y="6.69" width="2.38" height="2.38"/><rect x="49.06" y="6.69" width="2.38" height="2.38"/><rect x="51.29" y="6.69" width="2.38" height="2.38"/><rect x="57.98" y="6.69" width="2.38" height="2.38"/><rect x="60.21" y="6.69" width="2.38" height="2.38"/><rect x="62.44" y="6.69" width="2.38" height="2.38"/><rect x="66.90" y="6.69" width="2.38" height="2.38"/><rect x="71.36" y="6.69" width="2.38" height="2.38"/><rect x="73.59" y="6.69" width="2.38" height="2.38"/><rect x="75.82" y="6.69" width="2.38" height="2.38"/><rect x="80.28" y="6.69" width="2.38" height="2.38"/><rect x="0.00" y="8.92" width="2.38" height="2.38"/><rect x="4.46" y="8.92" width="2.38" height="2.38"/><rect x="6.69" y="8.92" width="2.38" height="2.38"/><rect x="8.92" y="8.92" width="2.38" height="2.38"/><rect x="13.38" y="8.92" width="2.38" height="2.38"/><rect x="20.07" y="8.92" width="2.38" height="2.38"/><rect x="31.22" y="8.92" width="2.38" height="2.38"/><rect x="33.45" y="8.92" width="2.38" height="2.38"/><rect x="35.68" y="8.92" width="2.38" height="2.38"/><rect x="44.60" y="8.92" width="2.38" height="2.38"/><rect x="46.83" y="8.92" width="2.38" height="2.38"/><rect x="62.44" y="8.92" width="2.38" height="2.38"/><rect x="66.90" y="8.92" width="2.38" height="2.38"/><rect x="71.36" y="8.92" width="2.38" height="2.38"/><rect x="73.59" y="8.92" width="2.38" height="2.38"/><rect x="75.82" y="8.92" width="2.38" height="2.38"/><rect x="80.28" y="8.92" width="2.38" height="2.38"/><rect x="0.00" y="11.15" width="2.38" height="2.38"/><rect x="13.38" y="11.15" width="2.38" height="2.38"/><rect x="17.84" y="11.15" width="2.38" height="2.38"/><rect x="26.76" y="11.15" width="2.38" height="2.38"/><rect x="33.45" y="11.15" width="2.38" height="2.38"/><rect x="44.60" y="11.15" width="2.38" height="2.38"/><rect x="46.83" y="11.15" width="2.38" height="2.38"/><rect x="51.29" y="11.15" width="2.38" height="2.38"/><rect x="57.98" y="11.15" width="2.38" height="2.38"/><rect x="60.21" y="11.15" width="2.38" height="2.38"/><rect x="66.90" y="11.15" width="2.38" height="2.38"/><rect x="80.28" y="11.15" width="2.38" height="2.38"/><rect x="0.00" y="13.38" width="2.38" height="2.38"/><rect x="2.23" y="13.38" width="2.38" height="2.38"/><rect x="4.46" y="13.38" width="2.38" height="2.38"/><rect x="6.69" y="13.38" width="2.38" height="2.38"/><rect x="8.92" y="13.38" width="2.38" height="2.38"/><rect x="11.15" y="13.38" width="2.38" height="2.38"/><rect x="13.38" y="13.38" width="2.38" height="2.38"/><rect x="22.30" y="13.38" width="2.38" height="2.38"/><rect x="28.99" y="13.38" width="2.38" height="2.38"/><rect x="31.22" y="13.38" width="2.38" height="2.38"/><rect x="33.45" y="13.38" width="2.38" height="2.38"/><rect x="35.68" y="13.38" width="2.38" height="2.38"/><rect x="40.14" y="13.38" width="2.38" height="2.38"/><rect x="42.37" y="13.38" width="2.38" height="2.38"/><rect x="44.60" y="13.38" width="2.38" height="2.38"/><rect x="49.06" y="13.38" width="2.38" height="2.38"/><rect x="51.29" y="13.38" width="2.38" height="2.38"/><rect x="57.98" y="13.38" width="2.38" height="2.38"/><rect x="66.90" y="13.38" width="2.38" height="2.38"/><rect x="69.13" y="13.38" width="2.38" height="2.38"/><rect x="71.36" y="13.38" width="2.38" height="2.38"/><rect x="73.59" y="13.38" width="2.38" height="2.38"/><rect x="75.82" y="13.38" width="2.38" height="2.38"/><rect x="78.05" y="13.38" width="2.38" height="2.38"/><rect x="80.28" y="13.38" width="2.38" height="2.38"/><rect x="20.07" y="15.61" width="2.38" height="2.38"/><rect x="22.30" y="15.61" width="2.38" height="2.38"/><rect x="35.68" y="15.61" width="2.38" height="2.38"/><rect x="46.83" y="15.61" width="2.38" height="2.38"/><rect x="51.29" y="15.61" width="2.38" height="2.38"/><rect x="62.44" y="15.61" width="2.38" height="2.38"/><rect x="0.00" y="17.84" width="2.38" height="2.38"/><rect x="8.92" y="17.84" width="2.38" height="2.38"/><rect x="15.61" y="17.84" width="2.38" height="2.38"/><rect x="22.30" y="17.84" width="2.38" height="2.38"/><rect x="26.76" y="17.84" width="2.38" height="2.38"/><rect x="28.99" y="17.84" width="2.38" height="2.38"/><rect x="35.68" y="17.84" width="2.38" height="2.38"/><rect x="37.91" y="17.84" width="2.38" height="2.38"/><rect x="42.37" y="17.84" width="2.38" height="2.38"/><rect x="44.60" y="17.84" width="2.38" height="2.38"/><rect x="46.83" y="17.84" width="2.38" height="2.38"/><rect x="51.29" y="17.84" width="2.38" height="2.38"/><rect x="55.75" y="17.84" width="2.38" height="2.38"/><rect x="57.98" y="17.84" width="2.38" height="2.38"/><rect x="60.21" y="17.84" width="2.38" height="2.38"/><rect x="66.90" y="17.84" width="2.38" height="2.38"/><rect x="75.82" y="17.84" width="2.38" height="2.38"/><rect x="78.05" y="17.84" width="2.38" height="2.38"/><rect x="80.28" y="17.84" width="2.38" height="2.38"/><rect x="2.23" y="20.07" width="2.38" height="2.38"/><rect x="4.46" y="20.07" width="2.38" height="2.38"/><rect x="6.69" y="20.07" width="2.38" height="2.38"/><rect x="13.38" y="20.07" width="2.38" height="2.38"/><rect x="15.61" y="20.07" width="2.38" height="2.38"/><rect x="24.53" y="20.07" width="2.38" height="2.38"/><rect x="26.76" y="20.07" width="2.38" height="2.38"/><rect x="31.22" y="20.07" width="2.38" height="2.38"/><rect x="33.45" y="20.07" width="2.38" height="2.38"/><rect x="42.37" y="20.07" width="2.38" height="2.38"/><rect x="46.83" y="20.07" width="2.38" height="2.38"/><rect x="51.29" y="20.07" width="2.38" height="2.38"/><rect x="53.52" y="20.07" width="2.38" height="2.38"/><rect x="60.21" y="20.07" width="2.38" height="2.38"/><rect x="62.44" y="20.07" width="2.38" height="2.38"/><rect x="66.90" y="20.07" width="2.38" height="2.38"/><rect x="69.13" y="20.07" width="2.38" height="2.38"/><rect x="71.36" y="20.07" width="2.38" height="2.38"/><rect x="73.59" y="20.07" width="2.38" height="2.38"/><rect x="75.82" y="20.07" width="2.38" height="2.38"/><rect x="78.05" y="20.07" width="2.38" height="2.38"/><rect x="80.28" y="20.07" width="2.38" height="2.38"/><rect x="2.23" y="22.30" width="2.38" height="2.38"/><rect x="6.69" y="22.30" width="2.38" height="2.38"/><rect x="8.92" y="22.30" width="2.38" height="2.38"/><rect x="11.15" y="22.30" width="2.38" height="2.38"/><rect x="13.38" y="22.30" width="2.38" height="2.38"/><rect x="15.61" y="22.30" width="2.38" height="2.38"/><rect x="22.30" y="22.30" width="2.38" height="2.38"/><rect x="24.53" y="22.30" width="2.38" height="2.38"/><rect x="28.99" y="22.30" width="2.38" height="2.38"/><rect x="33.45" y="22.30" width="2.38" height="2.38"/><rect x="35.68" y="22.30" width="2.38" height="2.38"/><rect x="40.14" y="22.30" width="2.38" height="2.38"/><rect x="49.06" y="22.30" width="2.38" height="2.38"/><rect x="57.98" y="22.30" width="2.38" height="2.38"/><rect x="60.21" y="22.30" width="2.38" height="2.38"/><rect x="62.44" y="22.30" width="2.38" height="2.38"/><rect x="64.67" y="22.30" width="2.38" height="2.38"/><rect x="66.90" y="22.30" width="2.38" height="2.38"/><rect x="71.36" y="22.30" width="2.38" height="2.38"/><rect x="73.59" y="22.30" width="2.38" height="2.38"/><rect x="75.82" y="22.30" width="2.38" height="2.38"/><rect x="2.23" y="24.53" width="2.38" height="2.38"/><rect x="4.46" y="24.53" width="2.38" height="2.38"/><rect x="6.69" y="24.53" width="2.38" height="2.38"/><rect x="8.92" y="24.53" width="2.38" height="2.38"/><rect x="11.15" y="24.53" width="2.38" height="2.38"/><rect x="13.38" y="24.53" width="2.38" height="2.38"/><rect x="15.61" y="24.53" width="2.38" height="2.38"/><rect x="24.53" y="24.53" width="2.38" height="2.38"/><rect x="28.99" y="24.53" width="2.38" height="2.38"/><rect x="31.22" y="24.53" width="2.38" height="2.38"/><rect x="33.45" y="24.53" width="2.38" height="2.38"/><rect x="35.68" y="24.53" width="2.38" height="2.38"/><rect x="37.91" y="24.53" width="2.38" height="2.38"/><rect x="42.37" y="24.53" width="2.38" height="2.38"/><rect x="46.83" y="24.53" width="2.38" height="2.38"/><rect x="49.06" y="24.53" width="2.38" height="2.38"/><rect x="51.29" y="24.53" width="2.38" height="2.38"/><rect x="53.52" y="24.53" width="2.38" height="2.38"/><rect x="55.75" y="24.53" width="2.38" height="2.38"/><rect x="57.98" y="24.53" width="2.38" height="2.38"/><rect x="60.21" y="24.53" width="2.38" height="2.38"/><rect x="62.44" y="24.53" width="2.38" height="2.38"/><rect x="78.05" y="24.53" width="2.38" height="2.38"/><rect x="80.28" y="24.53" width="2.38" height="2.38"/><rect x="2.23" y="26.76" width="2.38" height="2.38"/><rect x="8.92" y="26.76" width="2.38" height="2.38"/><rect x="22.30" y="26.76" width="2.38" height="2.38"/><rect x="44.60" y="26.76" width="2.38" height="2.38"/><rect x="46.83" y="26.76" width="2.38" height="2.38"/><rect x="49.06" y="26.76" width="2.38" height="2.38"/><rect x="51.29" y="26.76" width="2.38" height="2.38"/><rect x="53.52" y="26.76" width="2.38" height="2.38"/><rect x="66.90" y="26.76" width="2.38" height="2.38"/><rect x="69.13" y="26.76" width="2.38" height="2.38"/><rect x="0.00" y="28.99" width="2.38" height="2.38"/><rect x="4.46" y="28.99" width="2.38" height="2.38"/><rect x="6.69" y="28.99" width="2.38" height="2.38"/><rect x="8.92" y="28.99" width="2.38" height="2.38"/><rect x="13.38" y="28.99" width="2.38" height="2.38"/><rect x="20.07" y="28.99" width="2.38" height="2.38"/><rect x="22.30" y="28.99" width="2.38" height="2.38"/><rect x="24.53" y="28.99" width="2.38" height="2.38"/><rect x="35.68" y="28.99" width="2.38" height="2.38"/><rect x="37.91" y="28.99" width="2.38" height="2.38"/><rect x="40.14" y="28.99" width="2.38" height="2.38"/><rect x="44.60" y="28.99" width="2.38" height="2.38"/><rect x="49.06" y="28.99" width="2.38" height="2.38"/><rect x="51.29" y="28.99" width="2.38" height="2.38"/><rect x="53.52" y="28.99" width="2.38" height="2.38"/><rect x="62.44" y="28.99" width="2.38" height="2.38"/><rect x="66.90" y="28.99" width="2.38" height="2.38"/><rect x="69.13" y="28.99" width="2.38" height="2.38"/><rect x="71.36" y="28.99" width="2.38" height="2.38"/><rect x="75.82" y="28.99" width="2.38" height="2.38"/><rect x="0.00" y="31.22" width="2.38" height="2.38"/><rect x="2.23" y="31.22" width="2.38" height="2.38"/><rect x="8.92" y="31.22" width="2.38" height="2.38"/><rect x="11.15" y="31.22" width="2.38" height="2.38"/><rect x="13.38" y="31.22" width="2.38" height="2.38"/><rect x="17.84" y="31.22" width="2.38" height="2.38"/><rect x="22.30" y="31.22" width="2.38" height="2.38"/><rect x="28.99" y="31.22" width="2.38" height="2.38"/><rect x="51.29" y="31.22" width="2.38" height="2.38"/><rect x="53.52" y="31.22" width="2.38" height="2.38"/><rect x="55.75" y="31.22" width="2.38" height="2.38"/><rect x="57.98" y="31.22" width="2.38" height="2.38"/><rect x="60.21" y="31.22" width="2.38" height="2.38"/><rect x="62.44" y="31.22" width="2.38" height="2.38"/><rect x="66.90" y="31.22" width="2.38" height="2.38"/><rect x="73.59" y="31.22" width="2.38" height="2.38"/><rect x="0.00" y="33.45" width="2.38" height="2.38"/><rect x="2.23" y="33.45" width="2.38" height="2.38"/><rect x="4.46" y="33.45" width="2.38" height="2.38"/><rect x="11.15" y="33.45" width="2.38" height="2.38"/><rect x="13.38" y="33.45" width="2.38" height="2.38"/><rect x="15.61" y="33.45" width="2.38" height="2.38"/><rect x="17.84" y="33.45" width="2.38" height="2.38"/><rect x="20.07" y="33.45" width="2.38" height="2.38"/><rect x="24.53" y="33.45" width="2.38" height="2.38"/><rect x="28.99" y="33.45" width="2.38" height="2.38"/><rect x="57.98" y="33.45" width="2.38" height="2.38"/><rect x="62.44" y="33.45" width="2.38" height="2.38"/><rect x="69.13" y="33.45" width="2.38" height="2.38"/><rect x="71.36" y="33.45" width="2.38" height="2.38"/><rect x="75.82" y="33.45" width="2.38" height="2.38"/><rect x="78.05" y="33.45" width="2.38" height="2.38"/><rect x="80.28" y="33.45" width="2.38" height="2.38"/><rect x="0.00" y="35.68" width="2.38" height="2.38"/><rect x="6.69" y="35.68" width="2.38" height="2.38"/><rect x="11.15" y="35.68" width="2.38" height="2.38"/><rect x="15.61" y="35.68" width="2.38" height="2.38"/><rect x="17.84" y="35.68" width="2.38" height="2.38"/><rect x="20.07" y="35.68" width="2.38" height="2.38"/><rect x="22.30" y="35.68" width="2.38" height="2.38"/><rect x="26.76" y="35.68" width="2.38" height="2.38"/><rect x="28.99" y="35.68" width="2.38" height="2.38"/><rect x="51.29" y="35.68" width="2.38" height="2.38"/><rect x="60.21" y="35.68" width="2.38" height="2.38"/><rect x="62.44" y="35.68" width="2.38" height="2.38"/><rect x="66.90" y="35.68" width="2.38" height="2.38"/><rect x="69.13" y="35.68" width="2.38" height="2.38"/><rect x="71.36" y="35.68" width="2.38" height="2.38"/><rect x="73.59" y="35.68" width="2.38" height="2.38"/><rect x="78.05" y="35.68" width="2.38" height="2.38"/><rect x="4.46" y="37.91" width="2.38" height="2.38"/><rect x="6.69" y="37.91" width="2.38" height="2.38"/><rect x="8.92" y="37.91" width="2.38" height="2.38"/><rect x="11.15" y="37.91" width="2.38" height="2.38"/><rect x="13.38" y="37.91" width="2.38" height="2.38"/><rect x="22.30" y="37.91" width="2.38" height="2.38"/><rect x="24.53" y="37.91" width="2.38" height="2.38"/><rect x="51.29" y="37.91" width="2.38" height="2.38"/><rect x="53.52" y="37.91" width="2.38" height="2.38"/><rect x="69.13" y="37.91" width="2.38" height="2.38"/><rect x="73.59" y="37.91" width="2.38" height="2.38"/><rect x="78.05" y="37.91" width="2.38" height="2.38"/><rect x="2.23" y="40.14" width="2.38" height="2.38"/><rect x="4.46" y="40.14" width="2.38" height="2.38"/><rect x="6.69" y="40.14" width="2.38" height="2.38"/><rect x="13.38" y="40.14" width="2.38" height="2.38"/><rect x="15.61" y="40.14" width="2.38" height="2.38"/><rect x="22.30" y="40.14" width="2.38" height="2.38"/><rect x="24.53" y="40.14" width="2.38" height="2.38"/><rect x="28.99" y="40.14" width="2.38" height="2.38"/><rect x="53.52" y="40.14" width="2.38" height="2.38"/><rect x="55.75" y="40.14" width="2.38" height="2.38"/><rect x="57.98" y="40.14" width="2.38" height="2.38"/><rect x="62.44" y="40.14" width="2.38" height="2.38"/><rect x="64.67" y="40.14" width="2.38" height="2.38"/><rect x="71.36" y="40.14" width="2.38" height="2.38"/><rect x="73.59" y="40.14" width="2.38" height="2.38"/><rect x="75.82" y="40.14" width="2.38" height="2.38"/><rect x="78.05" y="40.14" width="2.38" height="2.38"/><rect x="0.00" y="42.37" width="2.38" height="2.38"/><rect x="8.92" y="42.37" width="2.38" height="2.38"/><rect x="13.38" y="42.37" width="2.38" height="2.38"/><rect x="17.84" y="42.37" width="2.38" height="2.38"/><rect x="20.07" y="42.37" width="2.38" height="2.38"/><rect x="24.53" y="42.37" width="2.38" height="2.38"/><rect x="28.99" y="42.37" width="2.38" height="2.38"/><rect x="51.29" y="42.37" width="2.38" height="2.38"/><rect x="53.52" y="42.37" width="2.38" height="2.38"/><rect x="55.75" y="42.37" width="2.38" height="2.38"/><rect x="57.98" y="42.37" width="2.38" height="2.38"/><rect x="71.36" y="42.37" width="2.38" height="2.38"/><rect x="73.59" y="42.37" width="2.38" height="2.38"/><rect x="80.28" y="42.37" width="2.38" height="2.38"/><rect x="2.23" y="44.60" width="2.38" height="2.38"/><rect x="4.46" y="44.60" width="2.38" height="2.38"/><rect x="6.69" y="44.60" width="2.38" height="2.38"/><rect x="8.92" y="44.60" width="2.38" height="2.38"/><rect x="11.15" y="44.60" width="2.38" height="2.38"/><rect x="13.38" y="44.60" width="2.38" height="2.38"/><rect x="15.61" y="44.60" width="2.38" height="2.38"/><rect x="20.07" y="44.60" width="2.38" height="2.38"/><rect x="24.53" y="44.60" width="2.38" height="2.38"/><rect x="26.76" y="44.60" width="2.38" height="2.38"/><rect x="51.29" y="44.60" width="2.38" height="2.38"/><rect x="53.52" y="44.60" width="2.38" height="2.38"/><rect x="60.21" y="44.60" width="2.38" height="2.38"/><rect x="62.44" y="44.60" width="2.38" height="2.38"/><rect x="64.67" y="44.60" width="2.38" height="2.38"/><rect x="69.13" y="44.60" width="2.38" height="2.38"/><rect x="75.82" y="44.60" width="2.38" height="2.38"/><rect x="78.05" y="44.60" width="2.38" height="2.38"/><rect x="2.23" y="46.83" width="2.38" height="2.38"/><rect x="6.69" y="46.83" width="2.38" height="2.38"/><rect x="8.92" y="46.83" width="2.38" height="2.38"/><rect x="11.15" y="46.83" width="2.38" height="2.38"/><rect x="22.30" y="46.83" width="2.38" height="2.38"/><rect x="24.53" y="46.83" width="2.38" height="2.38"/><rect x="26.76" y="46.83" width="2.38" height="2.38"/><rect x="57.98" y="46.83" width="2.38" height="2.38"/><rect x="60.21" y="46.83" width="2.38" height="2.38"/><rect x="62.44" y="46.83" width="2.38" height="2.38"/><rect x="66.90" y="46.83" width="2.38" height="2.38"/><rect x="69.13" y="46.83" width="2.38" height="2.38"/><rect x="73.59" y="46.83" width="2.38" height="2.38"/><rect x="75.82" y="46.83" width="2.38" height="2.38"/><rect x="78.05" y="46.83" width="2.38" height="2.38"/><rect x="0.00" y="49.06" width="2.38" height="2.38"/><rect x="8.92" y="49.06" width="2.38" height="2.38"/><rect x="11.15" y="49.06" width="2.38" height="2.38"/><rect x="13.38" y="49.06" width="2.38" height="2.38"/><rect x="15.61" y="49.06" width="2.38" height="2.38"/><rect x="20.07" y="49.06" width="2.38" height="2.38"/><rect x="22.30" y="49.06" width="2.38" height="2.38"/><rect x="24.53" y="49.06" width="2.38" height="2.38"/><rect x="51.29" y="49.06" width="2.38" height="2.38"/><rect x="53.52" y="49.06" width="2.38" height="2.38"/><rect x="55.75" y="49.06" width="2.38" height="2.38"/><rect x="57.98" y="49.06" width="2.38" height="2.38"/><rect x="64.67" y="49.06" width="2.38" height="2.38"/><rect x="66.90" y="49.06" width="2.38" height="2.38"/><rect x="73.59" y="49.06" width="2.38" height="2.38"/><rect x="0.00" y="51.29" width="2.38" height="2.38"/><rect x="2.23" y="51.29" width="2.38" height="2.38"/><rect x="11.15" y="51.29" width="2.38" height="2.38"/><rect x="13.38" y="51.29" width="2.38" height="2.38"/><rect x="15.61" y="51.29" width="2.38" height="2.38"/><rect x="17.84" y="51.29" width="2.38" height="2.38"/><rect x="26.76" y="51.29" width="2.38" height="2.38"/><rect x="31.22" y="51.29" width="2.38" height="2.38"/><rect x="33.45" y="51.29" width="2.38" height="2.38"/><rect x="40.14" y="51.29" width="2.38" height="2.38"/><rect x="46.83" y="51.29" width="2.38" height="2.38"/><rect x="49.06" y="51.29" width="2.38" height="2.38"/><rect x="51.29" y="51.29" width="2.38" height="2.38"/><rect x="53.52" y="51.29" width="2.38" height="2.38"/><rect x="55.75" y="51.29" width="2.38" height="2.38"/><rect x="62.44" y="51.29" width="2.38" height="2.38"/><rect x="64.67" y="51.29" width="2.38" height="2.38"/><rect x="66.90" y="51.29" width="2.38" height="2.38"/><rect x="71.36" y="51.29" width="2.38" height="2.38"/><rect x="73.59" y="51.29" width="2.38" height="2.38"/><rect x="75.82" y="51.29" width="2.38" height="2.38"/><rect x="0.00" y="53.52" width="2.38" height="2.38"/><rect x="2.23" y="53.52" width="2.38" height="2.38"/><rect x="4.46" y="53.52" width="2.38" height="2.38"/><rect x="11.15" y="53.52" width="2.38" height="2.38"/><rect x="13.38" y="53.52" width="2.38" height="2.38"/><rect x="17.84" y="53.52" width="2.38" height="2.38"/><rect x="20.07" y="53.52" width="2.38" height="2.38"/><rect x="22.30" y="53.52" width="2.38" height="2.38"/><rect x="26.76" y="53.52" width="2.38" height="2.38"/><rect x="31.22" y="53.52" width="2.38" height="2.38"/><rect x="33.45" y="53.52" width="2.38" height="2.38"/><rect x="40.14" y="53.52" width="2.38" height="2.38"/><rect x="42.37" y="53.52" width="2.38" height="2.38"/><rect x="46.83" y="53.52" width="2.38" height="2.38"/><rect x="49.06" y="53.52" width="2.38" height="2.38"/><rect x="53.52" y="53.52" width="2.38" height="2.38"/><rect x="57.98" y="53.52" width="2.38" height="2.38"/><rect x="62.44" y="53.52" width="2.38" height="2.38"/><rect x="64.67" y="53.52" width="2.38" height="2.38"/><rect x="66.90" y="53.52" width="2.38" height="2.38"/><rect x="75.82" y="53.52" width="2.38" height="2.38"/><rect x="80.28" y="53.52" width="2.38" height="2.38"/><rect x="2.23" y="55.75" width="2.38" height="2.38"/><rect x="4.46" y="55.75" width="2.38" height="2.38"/><rect x="11.15" y="55.75" width="2.38" height="2.38"/><rect x="13.38" y="55.75" width="2.38" height="2.38"/><rect x="20.07" y="55.75" width="2.38" height="2.38"/><rect x="22.30" y="55.75" width="2.38" height="2.38"/><rect x="28.99" y="55.75" width="2.38" height="2.38"/><rect x="31.22" y="55.75" width="2.38" height="2.38"/><rect x="35.68" y="55.75" width="2.38" height="2.38"/><rect x="44.60" y="55.75" width="2.38" height="2.38"/><rect x="49.06" y="55.75" width="2.38" height="2.38"/><rect x="51.29" y="55.75" width="2.38" height="2.38"/><rect x="57.98" y="55.75" width="2.38" height="2.38"/><rect x="60.21" y="55.75" width="2.38" height="2.38"/><rect x="62.44" y="55.75" width="2.38" height="2.38"/><rect x="66.90" y="55.75" width="2.38" height="2.38"/><rect x="69.13" y="55.75" width="2.38" height="2.38"/><rect x="71.36" y="55.75" width="2.38" height="2.38"/><rect x="78.05" y="55.75" width="2.38" height="2.38"/><rect x="2.23" y="57.98" width="2.38" height="2.38"/><rect x="6.69" y="57.98" width="2.38" height="2.38"/><rect x="15.61" y="57.98" width="2.38" height="2.38"/><rect x="17.84" y="57.98" width="2.38" height="2.38"/><rect x="22.30" y="57.98" width="2.38" height="2.38"/><rect x="26.76" y="57.98" width="2.38" height="2.38"/><rect x="28.99" y="57.98" width="2.38" height="2.38"/><rect x="31.22" y="57.98" width="2.38" height="2.38"/><rect x="35.68" y="57.98" width="2.38" height="2.38"/><rect x="37.91" y="57.98" width="2.38" height="2.38"/><rect x="44.60" y="57.98" width="2.38" height="2.38"/><rect x="46.83" y="57.98" width="2.38" height="2.38"/><rect x="49.06" y="57.98" width="2.38" height="2.38"/><rect x="51.29" y="57.98" width="2.38" height="2.38"/><rect x="53.52" y="57.98" width="2.38" height="2.38"/><rect x="55.75" y="57.98" width="2.38" height="2.38"/><rect x="57.98" y="57.98" width="2.38" height="2.38"/><rect x="60.21" y="57.98" width="2.38" height="2.38"/><rect x="64.67" y="57.98" width="2.38" height="2.38"/><rect x="69.13" y="57.98" width="2.38" height="2.38"/><rect x="78.05" y="57.98" width="2.38" height="2.38"/><rect x="0.00" y="60.21" width="2.38" height="2.38"/><rect x="4.46" y="60.21" width="2.38" height="2.38"/><rect x="15.61" y="60.21" width="2.38" height="2.38"/><rect x="20.07" y="60.21" width="2.38" height="2.38"/><rect x="26.76" y="60.21" width="2.38" height="2.38"/><rect x="33.45" y="60.21" width="2.38" height="2.38"/><rect x="35.68" y="60.21" width="2.38" height="2.38"/><rect x="40.14" y="60.21" width="2.38" height="2.38"/><rect x="44.60" y="60.21" width="2.38" height="2.38"/><rect x="49.06" y="60.21" width="2.38" height="2.38"/><rect x="55.75" y="60.21" width="2.38" height="2.38"/><rect x="57.98" y="60.21" width="2.38" height="2.38"/><rect x="62.44" y="60.21" width="2.38" height="2.38"/><rect x="64.67" y="60.21" width="2.38" height="2.38"/><rect x="66.90" y="60.21" width="2.38" height="2.38"/><rect x="69.13" y="60.21" width="2.38" height="2.38"/><rect x="78.05" y="60.21" width="2.38" height="2.38"/><rect x="0.00" y="62.44" width="2.38" height="2.38"/><rect x="6.69" y="62.44" width="2.38" height="2.38"/><rect x="17.84" y="62.44" width="2.38" height="2.38"/><rect x="24.53" y="62.44" width="2.38" height="2.38"/><rect x="28.99" y="62.44" width="2.38" height="2.38"/><rect x="35.68" y="62.44" width="2.38" height="2.38"/><rect x="40.14" y="62.44" width="2.38" height="2.38"/><rect x="42.37" y="62.44" width="2.38" height="2.38"/><rect x="46.83" y="62.44" width="2.38" height="2.38"/><rect x="51.29" y="62.44" width="2.38" height="2.38"/><rect x="62.44" y="62.44" width="2.38" height="2.38"/><rect x="64.67" y="62.44" width="2.38" height="2.38"/><rect x="66.90" y="62.44" width="2.38" height="2.38"/><rect x="69.13" y="62.44" width="2.38" height="2.38"/><rect x="71.36" y="62.44" width="2.38" height="2.38"/><rect x="73.59" y="62.44" width="2.38" height="2.38"/><rect x="80.28" y="62.44" width="2.38" height="2.38"/><rect x="22.30" y="64.67" width="2.38" height="2.38"/><rect x="26.76" y="64.67" width="2.38" height="2.38"/><rect x="28.99" y="64.67" width="2.38" height="2.38"/><rect x="33.45" y="64.67" width="2.38" height="2.38"/><rect x="35.68" y="64.67" width="2.38" height="2.38"/><rect x="37.91" y="64.67" width="2.38" height="2.38"/><rect x="46.83" y="64.67" width="2.38" height="2.38"/><rect x="49.06" y="64.67" width="2.38" height="2.38"/><rect x="51.29" y="64.67" width="2.38" height="2.38"/><rect x="57.98" y="64.67" width="2.38" height="2.38"/><rect x="62.44" y="64.67" width="2.38" height="2.38"/><rect x="71.36" y="64.67" width="2.38" height="2.38"/><rect x="73.59" y="64.67" width="2.38" height="2.38"/><rect x="78.05" y="64.67" width="2.38" height="2.38"/><rect x="80.28" y="64.67" width="2.38" height="2.38"/><rect x="0.00" y="66.90" width="2.38" height="2.38"/><rect x="2.23" y="66.90" width="2.38" height="2.38"/><rect x="4.46" y="66.90" width="2.38" height="2.38"/><rect x="6.69" y="66.90" width="2.38" height="2.38"/><rect x="8.92" y="66.90" width="2.38" height="2.38"/><rect x="11.15" y="66.90" width="2.38" height="2.38"/><rect x="13.38" y="66.90" width="2.38" height="2.38"/><rect x="24.53" y="66.90" width="2.38" height="2.38"/><rect x="26.76" y="66.90" width="2.38" height="2.38"/><rect x="28.99" y="66.90" width="2.38" height="2.38"/><rect x="31.22" y="66.90" width="2.38" height="2.38"/><rect x="40.14" y="66.90" width="2.38" height="2.38"/><rect x="46.83" y="66.90" width="2.38" height="2.38"/><rect x="51.29" y="66.90" width="2.38" height="2.38"/><rect x="53.52" y="66.90" width="2.38" height="2.38"/><rect x="55.75" y="66.90" width="2.38" height="2.38"/><rect x="57.98" y="66.90" width="2.38" height="2.38"/><rect x="60.21" y="66.90" width="2.38" height="2.38"/><rect x="62.44" y="66.90" width="2.38" height="2.38"/><rect x="66.90" y="66.90" width="2.38" height="2.38"/><rect x="71.36" y="66.90" width="2.38" height="2.38"/><rect x="73.59" y="66.90" width="2.38" height="2.38"/><rect x="78.05" y="66.90" width="2.38" height="2.38"/><rect x="0.00" y="69.13" width="2.38" height="2.38"/><rect x="13.38" y="69.13" width="2.38" height="2.38"/><rect x="17.84" y="69.13" width="2.38" height="2.38"/><rect x="26.76" y="69.13" width="2.38" height="2.38"/><rect x="31.22" y="69.13" width="2.38" height="2.38"/><rect x="33.45" y="69.13" width="2.38" height="2.38"/><rect x="46.83" y="69.13" width="2.38" height="2.38"/><rect x="55.75" y="69.13" width="2.38" height="2.38"/><rect x="62.44" y="69.13" width="2.38" height="2.38"/><rect x="71.36" y="69.13" width="2.38" height="2.38"/><rect x="73.59" y="69.13" width="2.38" height="2.38"/><rect x="75.82" y="69.13" width="2.38" height="2.38"/><rect x="78.05" y="69.13" width="2.38" height="2.38"/><rect x="0.00" y="71.36" width="2.38" height="2.38"/><rect x="4.46" y="71.36" width="2.38" height="2.38"/><rect x="6.69" y="71.36" width="2.38" height="2.38"/><rect x="8.92" y="71.36" width="2.38" height="2.38"/><rect x="13.38" y="71.36" width="2.38" height="2.38"/><rect x="17.84" y="71.36" width="2.38" height="2.38"/><rect x="22.30" y="71.36" width="2.38" height="2.38"/><rect x="31.22" y="71.36" width="2.38" height="2.38"/><rect x="40.14" y="71.36" width="2.38" height="2.38"/><rect x="42.37" y="71.36" width="2.38" height="2.38"/><rect x="44.60" y="71.36" width="2.38" height="2.38"/><rect x="46.83" y="71.36" width="2.38" height="2.38"/><rect x="60.21" y="71.36" width="2.38" height="2.38"/><rect x="62.44" y="71.36" width="2.38" height="2.38"/><rect x="64.67" y="71.36" width="2.38" height="2.38"/><rect x="66.90" y="71.36" width="2.38" height="2.38"/><rect x="69.13" y="71.36" width="2.38" height="2.38"/><rect x="71.36" y="71.36" width="2.38" height="2.38"/><rect x="73.59" y="71.36" width="2.38" height="2.38"/><rect x="75.82" y="71.36" width="2.38" height="2.38"/><rect x="78.05" y="71.36" width="2.38" height="2.38"/><rect x="80.28" y="71.36" width="2.38" height="2.38"/><rect x="0.00" y="73.59" width="2.38" height="2.38"/><rect x="4.46" y="73.59" width="2.38" height="2.38"/><rect x="6.69" y="73.59" width="2.38" height="2.38"/><rect x="8.92" y="73.59" width="2.38" height="2.38"/><rect x="13.38" y="73.59" width="2.38" height="2.38"/><rect x="17.84" y="73.59" width="2.38" height="2.38"/><rect x="20.07" y="73.59" width="2.38" height="2.38"/><rect x="24.53" y="73.59" width="2.38" height="2.38"/><rect x="31.22" y="73.59" width="2.38" height="2.38"/><rect x="35.68" y="73.59" width="2.38" height="2.38"/><rect x="40.14" y="73.59" width="2.38" height="2.38"/><rect x="42.37" y="73.59" width="2.38" height="2.38"/><rect x="44.60" y="73.59" width="2.38" height="2.38"/><rect x="51.29" y="73.59" width="2.38" height="2.38"/><rect x="53.52" y="73.59" width="2.38" height="2.38"/><rect x="55.75" y="73.59" width="2.38" height="2.38"/><rect x="60.21" y="73.59" width="2.38" height="2.38"/><rect x="62.44" y="73.59" width="2.38" height="2.38"/><rect x="64.67" y="73.59" width="2.38" height="2.38"/><rect x="69.13" y="73.59" width="2.38" height="2.38"/><rect x="73.59" y="73.59" width="2.38" height="2.38"/><rect x="75.82" y="73.59" width="2.38" height="2.38"/><rect x="80.28" y="73.59" width="2.38" height="2.38"/><rect x="0.00" y="75.82" width="2.38" height="2.38"/><rect x="4.46" y="75.82" width="2.38" height="2.38"/><rect x="6.69" y="75.82" width="2.38" height="2.38"/><rect x="8.92" y="75.82" width="2.38" height="2.38"/><rect x="13.38" y="75.82" width="2.38" height="2.38"/><rect x="17.84" y="75.82" width="2.38" height="2.38"/><rect x="20.07" y="75.82" width="2.38" height="2.38"/><rect x="24.53" y="75.82" width="2.38" height="2.38"/><rect x="28.99" y="75.82" width="2.38" height="2.38"/><rect x="31.22" y="75.82" width="2.38" height="2.38"/><rect x="33.45" y="75.82" width="2.38" height="2.38"/><rect x="40.14" y="75.82" width="2.38" height="2.38"/><rect x="44.60" y="75.82" width="2.38" height="2.38"/><rect x="46.83" y="75.82" width="2.38" height="2.38"/><rect x="57.98" y="75.82" width="2.38" height="2.38"/><rect x="60.21" y="75.82" width="2.38" height="2.38"/><rect x="62.44" y="75.82" width="2.38" height="2.38"/><rect x="71.36" y="75.82" width="2.38" height="2.38"/><rect x="73.59" y="75.82" width="2.38" height="2.38"/><rect x="80.28" y="75.82" width="2.38" height="2.38"/><rect x="0.00" y="78.05" width="2.38" height="2.38"/><rect x="13.38" y="78.05" width="2.38" height="2.38"/><rect x="17.84" y="78.05" width="2.38" height="2.38"/><rect x="20.07" y="78.05" width="2.38" height="2.38"/><rect x="22.30" y="78.05" width="2.38" height="2.38"/><rect x="26.76" y="78.05" width="2.38" height="2.38"/><rect x="28.99" y="78.05" width="2.38" height="2.38"/><rect x="31.22" y="78.05" width="2.38" height="2.38"/><rect x="37.91" y="78.05" width="2.38" height="2.38"/><rect x="42.37" y="78.05" width="2.38" height="2.38"/><rect x="44.60" y="78.05" width="2.38" height="2.38"/><rect x="53.52" y="78.05" width="2.38" height="2.38"/><rect x="55.75" y="78.05" width="2.38" height="2.38"/><rect x="60.21" y="78.05" width="2.38" height="2.38"/><rect x="62.44" y="78.05" width="2.38" height="2.38"/><rect x="64.67" y="78.05" width="2.38" height="2.38"/><rect x="66.90" y="78.05" width="2.38" height="2.38"/><rect x="69.13" y="78.05" width="2.38" height="2.38"/><rect x="80.28" y="78.05" width="2.38" height="2.38"/><rect x="0.00" y="80.28" width="2.38" height="2.38"/><rect x="2.23" y="80.28" width="2.38" height="2.38"/><rect x="4.46" y="80.28" width="2.38" height="2.38"/><rect x="6.69" y="80.28" width="2.38" height="2.38"/><rect x="8.92" y="80.28" width="2.38" height="2.38"/><rect x="11.15" y="80.28" width="2.38" height="2.38"/><rect x="13.38" y="80.28" width="2.38" height="2.38"/><rect x="17.84" y="80.28" width="2.38" height="2.38"/><rect x="20.07" y="80.28" width="2.38" height="2.38"/><rect x="37.91" y="80.28" width="2.38" height="2.38"/><rect x="40.14" y="80.28" width="2.38" height="2.38"/><rect x="44.60" y="80.28" width="2.38" height="2.38"/><rect x="46.83" y="80.28" width="2.38" height="2.38"/><rect x="55.75" y="80.28" width="2.38" height="2.38"/><rect x="57.98" y="80.28" width="2.38" height="2.38"/><rect x="60.21" y="80.28" width="2.38" height="2.38"/><rect x="64.67" y="80.28" width="2.38" height="2.38"/><rect x="71.36" y="80.28" width="2.38" height="2.38"/><rect x="78.05" y="80.28" width="2.38" height="2.38"/><rect x="80.28" y="80.28" width="2.38" height="2.38"/></g><rect x="33" y="33" width="18" height="18" rx="3" fill="#e8e8ee"/><path d="M36,37 l4,2 l2,6 l6,1 l1,4 h-10 z" fill="#6a6a7a"/><path d="M35,38 l3,4 l-1,3" stroke="#5050a0" stroke-width="1.2" fill="none"/></svg>
<!--/VP-->
<!-- ============ MAIN DIALOG ============ -->
<div id="dlg" class="a" style="left:439px;top:62px;width:976px;height:949px;background:#f0f0f0;border:1px solid #9a9a9a;box-shadow:0 1px 9px rgba(0,0,0,.22)"></div>
<div class="a" style="left:441px;top:63px;width:973px;height:30px;background:#fff"></div>
<div class="t" style="left:448px;top:71px;font-size:12px;color:#9a9a9a">3轴局部铣</div>
<div class="t" style="left:1341px;top:70px;font-size:13px;color:#999">?</div>
<svg class="a" style="left:1385px;top:71px" width="12" height="12"><path d="M1 1L11 11M11 1L1 11" stroke="#777" stroke-width="1"/></svg>
<!-- tabs -->
<div class="a" style="left:446px;top:120px;width:960px;height:852px;background:#fff;border:1px solid #d9d9d9"></div>
<div class="a" style="left:509px;top:102px;width:267px;height:19px;background:#f0f0f0;border:1px solid #d9d9d9;border-bottom:none"></div>
<div class="a" style="left:567px;top:103px;width:1px;height:17px;background:#d9d9d9"></div>
<div class="a" style="left:627px;top:103px;width:1px;height:17px;background:#d9d9d9"></div>
<div class="a" style="left:669px;top:103px;width:1px;height:17px;background:#d9d9d9"></div>
<div class="a" style="left:717px;top:103px;width:1px;height:17px;background:#d9d9d9"></div>
<div class="a" style="left:446px;top:100px;width:64px;height:22px;background:#fff;border:1px solid #d9d9d9;border-bottom:none"></div>
<div class="t" style="left:454px;top:104px">曲面路径</div>
<div class="t" style="left:513px;top:105px">刀轴控制</div>
<div class="t" style="left:573px;top:105px">干涉检查</div>
<div class="t" style="left:633px;top:105px">连接</div>
<div class="t" style="left:675px;top:105px">粗加工</div>
<div class="t" style="left:723px;top:105px">实用工具</div>
<!-- group 模式 -->
<div class="a" style="left:456px;top:154px;width:440px;height:250px;border:1px solid #dcdcdc"></div>
<div class="t" style="left:462px;top:149px;background:#fff;padding:0 3px">模式</div>
<div class="a" style="left:465px;top:164px;width:326px;height:21px;background:#e5e5e5;border:1px solid #adadad"></div>
<div class="t" style="left:468px;top:169px">两曲线仿形</div>
<svg class="a" style="left:776px;top:171px" width="10" height="7"><path d="M1 1L5 5L9 1" stroke="#333" fill="none" stroke-width="1"/></svg>
<div class="a" style="left:464px;top:194px;width:321px;height:36px;border:1px solid #dcdcdc"></div>
<div class="t" style="left:469px;top:190px;background:#fff;padding:0 3px">编辑曲线:</div>
<div class="btn" style="left:471px;top:204px;width:148px;height:19px">第一...</div>
<div class="btn" style="left:626px;top:204px;width:148px;height:19px">第二...</div>
<div class="btn" style="left:465px;top:282px;width:144px;height:19px">驱动曲面</div>
<div class="t" style="left:463px;top:315px">驱动曲面余量</div>
<div class="a" style="left:595px;top:311px;width:47px;height:20px;background:#fff;border:1px solid #7a7a7a"></div>
<div class="t" style="left:599px;top:315px">0</div>
<!-- group 区域 -->
<div class="a" style="left:456px;top:414px;width:440px;height:145px;border:1px solid #dcdcdc"></div>
<div class="t" style="left:462px;top:410px;background:#fff;padding:0 3px">区域</div>
<div class="t" style="left:463px;top:434px">类型</div>
<div class="a" style="left:548px;top:430px;width:120px;height:21px;background:#e5e5e5;border:1px solid #adadad"></div>
<div class="t" style="left:551px;top:435px">完全, 避免边加工</div>
<div class="cb" style="left:463px;top:478px"></div>
<div class="btn dis" style="left:482px;top:476px;width:160px;height:19px;background:#ccc;border-color:#c4c4c4">圆角过渡</div>
<div class="cb" style="left:463px;top:502px"></div>
<div class="btn dis" style="left:482px;top:501px;width:160px;height:19px;background:#ccc;border-color:#c4c4c4">延伸/修剪</div>
<div class="cb" style="left:463px;top:526px"></div>
<div class="btn dis" style="left:482px;top:525px;width:160px;height:19px;background:#ccc;border-color:#c4c4c4">角度范围</div>
<!-- group 排序 -->
<div class="a" style="left:456px;top:570px;width:440px;height:172px;border:1px solid #dcdcdc"></div>
<div class="t" style="left:462px;top:565px;background:#fff;padding:0 3px">排序</div>
<div class="cb" style="left:461px;top:581px"></div>
<div class="t" style="left:477px;top:582px">切换步距方向</div>
<div class="t" style="left:461px;top:602px">铣削方式</div>
<div class="t" style="left:461px;top:631px">铣削顺序</div>
<div class="cb" style="left:461px;top:706px"></div>
<div class="btn dis" style="left:480px;top:703px;width:170px;height:19px;background:#ccc;border-color:#c4c4c4">起始点</div>
<!-- bottom buttons -->
<div class="btn" style="left:1091px;top:981px;width:73px;height:21px;line-height:20px">隐藏</div>
<div class="btn" style="left:1172px;top:981px;width:73px;height:21px;line-height:20px">确定</div>
<div class="btn" style="left:1253px;top:981px;width:73px;height:21px;line-height:20px">取消</div>
<div class="btn" style="left:1334px;top:981px;width:73px;height:21px;line-height:20px">帮助</div>

<!--CUT--><svg class="a" style="left:905px;top:121px" width="300" height="198">
<defs><clipPath id="cp"><rect x="0" y="0" width="300" height="198"/></clipPath></defs>
<g clip-path="url(#cp)">
<path d="M15.7,183 L103,160 L185,172 L194,169 Q199,179 208.6,180.3 L236.5,174.3 Q241,184 253.8,185.2 L278,179.6 V198 H15.7 Z" fill="#3d5478"/>
<path d="M15.7,183 L103,160 M185,172 L194,169 Q199,179 208.6,180.3 L236.5,174.3 Q241,184 253.8,185.2 L278,179.6" stroke="#7fb0d0" stroke-width="1.2" fill="none"/>
<path d="M16,196 Q40,188 60,196 M62,188 L103,176 M185,186 L236.5,176 M205,197 L278,181.5" stroke="#7aaed0" stroke-width="1" fill="none"/><path d="M278,179.6 V198" stroke="#6a9ab8" stroke-width="1.5"/>
<path d="M16,185 L16,198 L40,198 Q30,190 16,185 Z" fill="#4f88aa"/>
<path d="M103.5,9 H185.5 V156 A41,41 0 0 1 103.5,156 Z" fill="#c1bfc3"/>
<path d="M103.5,9 V156 A41,41 0 0 0 185.5,156 V9" stroke="#858587" stroke-width="2" fill="none"/>
<path d="M148,10 C142,50 110,90 105,120 M185,41 C175,90 135,140 122,175 L120,196 M184,135 C180,160 170,180 160,194" stroke="#6a6a6c" stroke-width="1" fill="none"/>
</g></svg>
<!--/CUT-->
<!-- ============ SUB DIALOG ============ -->
<div id="sub" class="a" style="left:644px;top:319px;width:582px;height:525px;background:#f0f0f0;border:1px solid #6f6f6f;box-shadow:2px 3px 10px rgba(0,0,0,.3)"></div>
<div class="a" style="left:645px;top:320px;width:580px;height:30px;background:#fff"></div>
<div class="a" style="left:653px;top:328px;width:15px;height:12px;background:linear-gradient(90deg,#4f8f86 0,#4f8f86 45%,#dfe9ea 45%,#dfe9ea 70%,#9fb4b6 70%);border:1px solid #c9d4d4"></div>
<div class="t" style="left:674px;top:328px">曲面边界处理参数</div>
<div class="t" style="left:1153px;top:327px;font-size:13px">?</div>
<svg class="a" style="left:1196px;top:328px" width="12" height="12"><path d="M1 1L11 11M11 1L1 11" stroke="#111" stroke-width="1.1"/></svg>
<div class="t" style="left:650px;top:361px">合并曲面,当间距小于</div>
<div class="a" style="left:665px;top:383px;width:13px;height:13px;border:1px solid #333;border-radius:50%;background:#fff"></div>
<div class="a" style="left:668px;top:386px;width:7px;height:7px;border-radius:50%;background:#333"></div>
<div class="t" style="left:681px;top:384px">值</div>
<div class="a" style="left:861px;top:383px;width:56px;height:20px;background:#fff;border:1px solid #7a7a7a"></div>
<div class="t" style="left:864px;top:387px">0.1</div>
<div class="a" style="left:665px;top:420px;width:13px;height:13px;border:1px solid #333;border-radius:50%;background:#fff"></div>
<div class="t" style="left:681px;top:421px">刀具直径 <span style="font-size:9px;color:#666">%</span></div>
<div class="a" style="left:861px;top:415px;width:56px;height:20px;background:#f0f0f0;border:1px solid #ccc"></div>
<div class="t" style="left:864px;top:419px;color:#999">0</div>
<div class="cb" style="left:650px;top:451px"></div>
<div class="t" style="left:666px;top:452px">保持外部尖角边</div>
<div class="cb" style="left:650px;top:579px"></div>
<div class="t" style="left:666px;top:580px">延伸边线</div>
<svg class="a" style="left:0;top:0" width="1856" height="1080"><path d="M968.5,414.3 A96,48.5 0 0 1 1160.5,414.3 L1160.5,449.3 A96,48.5 0 0 0 968.5,449.3 Z" fill="#3c5178" stroke="#25344e" stroke-width="1"/>
<path d="M969.5,423.05 A95,48.5 0 0 1 1159.5,423.05" fill="none" stroke="#c9dced" stroke-width="1.2"/>
<path d="M969.5,431.8 A95,48.5 0 0 1 1159.5,431.8" fill="none" stroke="#c9dced" stroke-width="1.2"/>
<path d="M969.5,440.55 A95,48.5 0 0 1 1159.5,440.55" fill="none" stroke="#c9dced" stroke-width="1.2"/>
<path d="M968.5,414.3 A96,48.5 0 0 0 1160.5,414.3 L1160.5,449.3 A96,48.5 0 0 1 968.5,449.3 Z" fill="#4a7ea8" stroke="#25344e" stroke-width="1"/>
<path d="M969.5,423.05 A95,48.5 0 0 0 1159.5,423.05" fill="none" stroke="#c9dced" stroke-width="1.2"/>
<path d="M969.5,431.8 A95,48.5 0 0 0 1159.5,431.8" fill="none" stroke="#c9dced" stroke-width="1.2"/>
<path d="M969.5,440.55 A95,48.5 0 0 0 1159.5,440.55" fill="none" stroke="#c9dced" stroke-width="1.2"/>
<line x1="993.4" y1="381.7119477430402" x2="993.4" y2="416.7119477430402" stroke="#c9dced" stroke-width="1.2"/>
<line x1="1072.6" y1="365.9729475193775" x2="1072.6" y2="400.9729475193775" stroke="#c9dced" stroke-width="1.2"/>
<line x1="1127.5" y1="377.70463883243707" x2="1127.5" y2="412.70463883243707" stroke="#c9dced" stroke-width="1.2"/>
<line x1="1061" y1="462.76775593746993" x2="1061" y2="497.76775593746993" stroke="#c9dced" stroke-width="1.2"/>
<line x1="1138.5" y1="445.1962881372459" x2="1138.5" y2="480.1962881372459" stroke="#c9dced" stroke-width="1.2"/>
<ellipse cx="1064.5" cy="414.3" rx="96" ry="48.5" fill="none" stroke="#25344e" stroke-width="1"/>
<path d="M997.1,447.5857095965832 L1005.1,451.59862386003556 L1005.1,489.59862386003556 L997.1,485.5857095965832 Z" fill="#f0f0f0"/>
<line x1="996.6" y1="448.5857095965832" x2="996.6" y2="483.5857095965832" stroke="#000" stroke-width="1.6"/>
<line x1="1005.6" y1="452.59862386003556" x2="1005.6" y2="487.59862386003556" stroke="#000" stroke-width="1.6"/><path d="M968.5,577.8 A96,48.5 0 0 1 1160.5,577.8 L1160.5,612.8 A96,48.5 0 0 0 968.5,612.8 Z" fill="#3c5178" stroke="#25344e" stroke-width="1"/>
<path d="M969.5,586.55 A95,48.5 0 0 1 1159.5,586.55" fill="none" stroke="#c9dced" stroke-width="1.2"/>
<path d="M969.5,595.3 A95,48.5 0 0 1 1159.5,595.3" fill="none" stroke="#c9dced" stroke-width="1.2"/>
<path d="M969.5,604.05 A95,48.5 0 0 1 1159.5,604.05" fill="none" stroke="#c9dced" stroke-width="1.2"/>
<path d="M968.5,577.8 A96,48.5 0 0 0 1160.5,577.8 L1160.5,612.8 A96,48.5 0 0 1 968.5,612.8 Z" fill="#4a7ea8" stroke="#25344e" stroke-width="1"/>
<path d="M969.5,586.55 A95,48.5 0 0 0 1159.5,586.55" fill="none" stroke="#c9dced" stroke-width="1.2"/>
<path d="M969.5,595.3 A95,48.5 0 0 0 1159.5,595.3" fill="none" stroke="#c9dced" stroke-width="1.2"/>
<path d="M969.5,604.05 A95,48.5 0 0 0 1159.5,604.05" fill="none" stroke="#c9dced" stroke-width="1.2"/>
<line x1="993.4" y1="545.2119477430401" x2="993.4" y2="580.2119477430401" stroke="#c9dced" stroke-width="1.2"/>
<line x1="1072.6" y1="529.4729475193774" x2="1072.6" y2="564.4729475193774" stroke="#c9dced" stroke-width="1.2"/>
<line x1="1127.5" y1="541.204638832437" x2="1127.5" y2="576.204638832437" stroke="#c9dced" stroke-width="1.2"/>
<line x1="1061" y1="626.2677559374698" x2="1061" y2="661.2677559374698" stroke="#c9dced" stroke-width="1.2"/>
<line x1="1138.5" y1="608.6962881372459" x2="1138.5" y2="643.6962881372459" stroke="#c9dced" stroke-width="1.2"/>
<ellipse cx="1064.5" cy="577.8" rx="96" ry="48.5" fill="none" stroke="#25344e" stroke-width="1"/>
<line x1="997.6" y1="612.5838414002621" x2="997.6" y2="647.5838414002621" stroke="#c9dced" stroke-width="1.2"/>
<line x1="1005.5" y1="616.0593173422927" x2="1005.5" y2="651.0593173422927" stroke="#c9dced" stroke-width="1.2"/><path d="M1059.5,502 H1070 V511 H1080 L1064.8,526 L1049.5,511 H1059.5 Z" fill="#e9a71f"/></svg>
<div class="a" style="left:1066px;top:816px;width:73px;height:21px;background:#e1e1e1;border:2px solid #0c64c0"></div>
<div class="t" style="left:1089px;top:821px">确定</div>
<div class="a" style="left:1147px;top:816px;width:72px;height:21px;background:#e1e1e1;border:1px solid #adadad"></div>
<div class="t" style="left:1169px;top:821px">取消</div>

<!--TAIL--><div class="a" style="left:1111px;top:763px;width:95px;height:95px;border-radius:50%;background:rgba(255,255,30,.82);filter:blur(1px)"></div>
<svg class="a" style="left:1156px;top:810px" width="16" height="22"><path d="M1.5,1.5 V17 L5.5,13 L8.5,19.5 L11,18.5 L8,12 H13.5 Z" fill="#fff" stroke="#111" stroke-width="1"/></svg>
<!--/TAIL-->
</body></html>
